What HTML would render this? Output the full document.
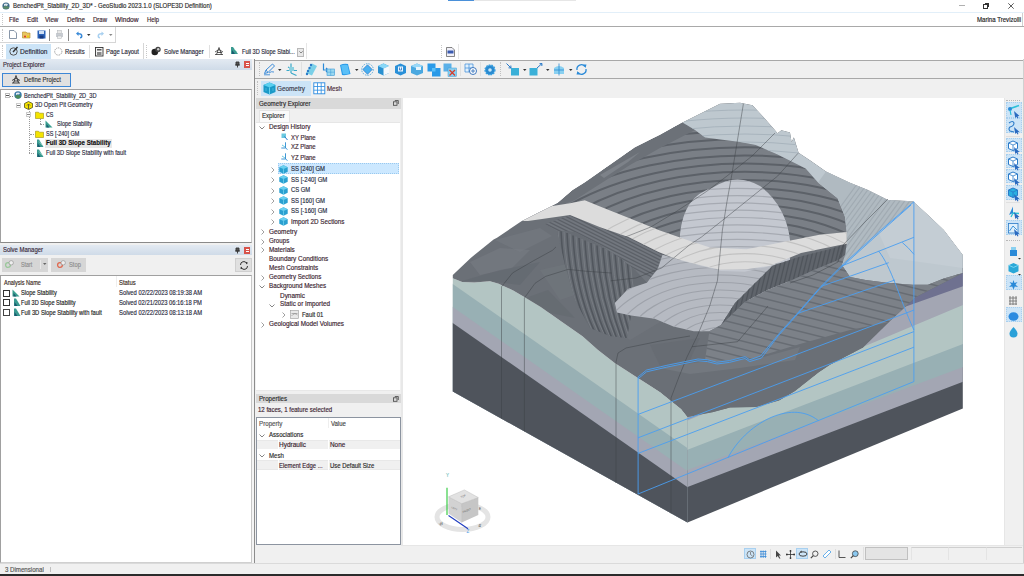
<!DOCTYPE html>
<html><head><meta charset="utf-8">
<style>
*{margin:0;padding:0;box-sizing:border-box}
html,body{width:1024px;height:576px;overflow:hidden;background:#fff;font-family:"Liberation Sans",sans-serif;font-size:6.3px;color:#1e1e1e}
.a{position:absolute}
.t{position:absolute;white-space:nowrap;line-height:1;-webkit-text-stroke:0.15px currentColor}
svg{position:absolute;overflow:visible}
</style></head><body>
<!-- ===== title bar ===== -->
<div class="a" style="left:448px;top:0;width:26px;height:1px;background:#4a90d9"></div>
<div class="a" style="left:474px;top:0;width:102px;height:1px;background:#e6e6e6"></div>
<svg style="left:2px;top:2px" width="8" height="8"><circle cx="4" cy="4" r="3.6" fill="#3d6a8a"/><path d="M1 5 Q4 3 7 5 L7 6 Q4 8 1 6Z" fill="#5a8a6a"/><path d="M2 2 Q4 1 6 2 L5 4 Q3 3 2 4Z" fill="#dfe8ee"/></svg>
<div class="t" style="left:13.00px;top:3px;color:#2a2a2a;transform:scaleX(0.956);transform-origin:0 0">BenchedPit_Stability_2D_3D* - GeoStudio 2023.1.0 (SLOPE3D Definition)</div>
<div class="a" style="left:959px;top:5px;width:6px;height:1px;background:#b0b0b0"></div>
<div class="a" style="left:983px;top:4px;width:5px;height:5px;border:1px solid #333"></div>
<div class="a" style="left:985px;top:3px;width:4px;height:4px;border-top:1px solid #333;border-right:1px solid #333"></div>
<svg style="left:1008px;top:3px" width="6" height="6"><path d="M0.3 0.3L5.7 5.7M5.7 0.3L0.3 5.7" stroke="#333" stroke-width="0.8"/></svg>
<div class="a" style="left:0;top:12px;width:1024px;height:1px;background:#e2eff9"></div>
<!-- ===== menu ===== -->
<div class="a" style="left:2px;top:14px;width:1px;height:11px;border-left:1px dotted #c8c8c8"></div>
<div class="a" style="left:0;top:26px;width:1024px;height:1px;background:#a9a9a9"></div>
<div class="a" style="left:1022px;top:13px;width:1px;height:13px;background:#d0d0d0"></div>
<div class="t" style="left:8.90px;top:16.5px;color:#3a1e2e;transform:scaleX(0.970);transform-origin:0 0">File</div>
<div class="t" style="left:26.50px;top:16.5px;color:#3a1e2e;transform:scaleX(1.013);transform-origin:0 0">Edit</div>
<div class="t" style="left:45.30px;top:16.5px;color:#3a1e2e;transform:scaleX(0.982);transform-origin:0 0">View</div>
<div class="t" style="left:66.90px;top:16.5px;color:#3a1e2e;transform:scaleX(0.983);transform-origin:0 0">Define</div>
<div class="t" style="left:93.00px;top:16.5px;color:#3a1e2e;transform:scaleX(0.952);transform-origin:0 0">Draw</div>
<div class="t" style="left:115.00px;top:16.5px;color:#3a1e2e;transform:scaleX(1.053);transform-origin:0 0">Window</div>
<div class="t" style="left:146.90px;top:16.5px;color:#3a1e2e;transform:scaleX(0.934);transform-origin:0 0">Help</div>
<div class="t" style="left:977.00px;top:17px;color:#222;transform:scaleX(0.967);transform-origin:0 0">Marina Trevizolli</div>
<!-- ===== toolbar row 1 ===== -->
<div class="a" style="left:0;top:27px;width:116px;height:16px;border-right:1px solid #d6d6d6;border-bottom:1px solid #d6d6d6"></div>
<div class="a" style="left:2px;top:29px;width:1px;height:12px;border-left:1px dotted #c8c8c8"></div>
<svg style="left:9px;top:30px" width="8" height="9"><path d="M0.5 0.5H5L7.5 3V8.5H0.5Z" fill="#fff" stroke="#6b7c93" stroke-width="0.8"/></svg>
<svg style="left:22px;top:30px" width="10" height="9"><path d="M0.5 2H4L5 3H8V8H0.5Z" fill="#e8c660" stroke="#b08a2a" stroke-width="0.6"/><circle cx="3" cy="6.5" r="1" fill="#e03020"/><circle cx="6" cy="6.5" r="1" fill="#f0d000"/></svg>
<svg style="left:37px;top:30px" width="9" height="9"><rect x="0.5" y="0.5" width="8" height="8" fill="#2a62b8"/><rect x="2" y="1" width="5" height="3" fill="#cfe0f5"/><rect x="2.5" y="5.5" width="4" height="3" fill="#1a3a80"/></svg>
<div class="a" style="left:49px;top:29px;width:1px;height:12px;background:#8a8a8a"></div>
<svg style="left:55px;top:30px" width="9" height="9"><rect x="1" y="3" width="7" height="4" fill="#c8ccd2"/><rect x="2.5" y="0.5" width="4" height="3" fill="#e8e8e8" stroke="#b0b4b8" stroke-width="0.5"/><rect x="2.5" y="6" width="4" height="2.5" fill="#f0f0f0" stroke="#b0b4b8" stroke-width="0.5"/></svg>
<div class="a" style="left:68px;top:29px;width:1px;height:12px;background:#8a8a8a"></div>
<svg style="left:75px;top:31px" width="8" height="8"><path d="M1 2.5 L3.5 0.5 V2 Q7.5 2 7.5 5 Q7.5 7.5 5 7.5 L5 6 Q6 6 6 4.8 Q6 3.5 3.5 3.5 V5Z" fill="#3a8ad8"/></svg>
<svg style="left:87px;top:34px" width="4" height="3"><path d="M0 0H3.5L1.75 2Z" fill="#333"/></svg>
<svg style="left:97px;top:31px" width="8" height="8"><path d="M7 2.5 L4.5 0.5 V2 Q0.5 2 0.5 5 Q0.5 7.5 3 7.5 L3 6 Q2 6 2 4.8 Q2 3.5 4.5 3.5 V5Z" fill="#a8d0f0"/></svg>
<svg style="left:109px;top:34px" width="4" height="3"><path d="M0 0H3.5L1.75 2Z" fill="#888"/></svg>
<!-- ===== toolbar row 2 ===== -->
<div class="a" style="left:0;top:43px;width:144px;height:16px;border-right:1px solid #d6d6d6"></div>
<div class="a" style="left:2px;top:45px;width:1px;height:12px;border-left:1px dotted #c8c8c8"></div>
<div class="a" style="left:6px;top:44px;width:45px;height:15px;background:#cce4f7"></div>
<svg style="left:9px;top:46px" width="10" height="10"><circle cx="4.5" cy="5.5" r="3.7" fill="none" stroke="#555" stroke-width="1"/><path d="M4 6 L8.5 1" stroke="#333" stroke-width="1.4"/></svg>
<div class="t" style="left:19.50px;top:48.5px;color:#2a2a3a;font-size:6.3px;transform:scaleX(1.047);transform-origin:0 0">Definition</div>
<svg style="left:54px;top:47px" width="9" height="9"><circle cx="4.3" cy="4.5" r="3.6" fill="none" stroke="#777" stroke-width="0.8" stroke-dasharray="1 0.8"/></svg>
<div class="t" style="left:64.80px;top:48.5px;color:#2a2a3a;transform:scaleX(0.933);transform-origin:0 0">Results</div>
<div class="a" style="left:89px;top:45px;width:1px;height:13px;background:#e0e0e0"></div>
<svg style="left:95px;top:46.5px" width="9" height="10"><rect x="0.5" y="0.5" width="7.5" height="8.5" fill="#f4f4f4" stroke="#333" stroke-width="0.9"/><rect x="2" y="2" width="4.5" height="1.5" fill="#555"/><rect x="2" y="5" width="4.5" height="3" fill="#888"/></svg>
<div class="t" style="left:106.00px;top:48.5px;color:#2a2a3a;transform:scaleX(0.933);transform-origin:0 0">Page Layout</div>
<div class="a" style="left:146px;top:45px;width:1px;height:13px;border-left:1px dotted #c8c8c8"></div>
<svg style="left:151px;top:46px" width="11" height="10"><circle cx="3.8" cy="6" r="3.3" fill="#222"/><circle cx="7" cy="3.5" r="2.7" fill="#444"/><circle cx="7.2" cy="3.3" r="1.2" fill="#ccc"/></svg>
<div class="t" style="left:163.70px;top:48.5px;color:#2a2a3a;transform:scaleX(0.935);transform-origin:0 0">Solve Manager</div>
<div class="a" style="left:209px;top:45px;width:1px;height:13px;background:#e0e0e0"></div>
<svg style="left:213.5px;top:46px" width="10" height="10"><path d="M1 8.5 H9 M2.5 8.5 L5 1.5 L7.5 8.5 M1 6 L5 3.5 L9 6 M3 6.5 L8 6.5" stroke="#333" stroke-width="0.8" fill="none"/></svg>
<svg style="left:230px;top:46px" width="9" height="10"><path d="M1 1 L3 1 L8 8 L1 8Z" fill="#3a9a90"/><path d="M2 4 L5 8 L2 8Z" fill="#1a5a70"/><path d="M4 3 L7 6" stroke="#8fd0c0" stroke-width="0.8"/></svg>
<div class="t" style="left:242.00px;top:48.5px;color:#2a2a3a;transform:scaleX(0.891);transform-origin:0 0">Full 3D Slope Stabi...</div>
<div class="a" style="left:297px;top:47.5px;width:7px;height:9px;background:#e8e8e8;border:1px solid #b8b8b8"></div>
<svg style="left:298.5px;top:50.5px" width="4" height="3"><path d="M0.3 0.3L2 2L3.7 0.3" stroke="#444" stroke-width="0.6" fill="none"/></svg>
<div class="a" style="left:306px;top:43px;width:1px;height:16px;background:#e6e6e6"></div>
<div class="a" style="left:439px;top:44px;width:20px;height:15px;border-right:1px solid #e6e6e6"></div>
<div class="a" style="left:441px;top:45px;width:1px;height:13px;border-left:1px dotted #c8c8c8"></div>
<svg style="left:446px;top:46.5px" width="9" height="10"><path d="M0.5 0.5H6L8.5 3V9.5H0.5Z" fill="#f0f0f8" stroke="#555" stroke-width="0.7"/><rect x="1.5" y="3.5" width="6" height="3" fill="#3a5ab0"/></svg>
<!-- ===== left panel ===== -->
<div class="a" style="left:0;top:59px;width:252px;height:10.5px;background:linear-gradient(#e3eaf2,#cfdbe8)"></div>
<div class="t" style="left:2.50px;top:62px;color:#3a2a3a;transform:scaleX(0.935);transform-origin:0 0">Project Explorer</div>
<svg style="left:235px;top:61px" width="5" height="7"><path d="M1 1H4V4H1Z M0 4H5 M2.5 4V6.5" stroke="#333" stroke-width="0.9" fill="#555"/></svg>
<div class="a" style="left:244px;top:61px;width:6px;height:7px;background:#d8534a"></div>
<div class="a" style="left:245.5px;top:63px;width:3px;height:3px;border-top:1px solid #fff;border-bottom:1px solid #fff"></div>
<div class="a" style="left:0;top:69.5px;width:252px;height:19.5px;background:#f0f0f0"></div>
<div class="a" style="left:2px;top:73px;width:69px;height:14px;background:#e1e1e1;border:1px solid #3d87d6"></div>
<svg style="left:11px;top:74px" width="10" height="11"><path d="M1 9 H9 M2.5 9 L5 1.5 L7.5 9 M1 6.5 L5 4 L9 6.5 M3 7 L8 7" stroke="#222" stroke-width="0.8" fill="none"/></svg>
<div class="t" style="left:23.75px;top:77px;color:#333;transform:scaleX(0.931);transform-origin:0 0">Define Project</div>
<div class="a" style="left:0;top:89px;width:252px;height:154px;background:#fff;border-left:1px solid #a0a0a0;border-top:1px solid #a0a0a0;border-bottom:1px solid #8a8a8a;border-right:1px solid #c8c8c8"></div>
<!-- tree -->
<div class="a" style="left:4.5px;top:93px;width:5px;height:5px;border:1px solid #bbb"></div>
<div class="a" style="left:5.5px;top:95px;width:3px;height:1px;background:#555"></div>
<div class="a" style="left:10px;top:95.5px;width:3px;height:1px;border-top:1px dotted #888"></div>
<svg style="left:13.5px;top:91px" width="8" height="8"><circle cx="4" cy="4" r="3.7" fill="#3a7aa8"/><path d="M0.8 5 Q4 3.2 7.2 5 Q6 7.8 4 7.8 Q2 7.8 0.8 5Z" fill="#4a8a5a"/><path d="M2 2 Q4 0.8 6 2 L5 3.5 Q3.5 3 2 4Z" fill="#e8eef2"/></svg>
<div class="t" style="left:24.40px;top:92.5px;color:#2a2a40;transform:scaleX(0.896);transform-origin:0 0">BenchedPit_Stability_2D_3D</div>
<div class="a" style="left:15.5px;top:102.5px;width:5px;height:5px;border:1px solid #ccc"></div>
<div class="a" style="left:16.5px;top:104.5px;width:3px;height:1px;background:#777"></div>
<svg style="left:24px;top:100.5px" width="9" height="9"><path d="M4.5 0.5 L8.5 2.5 V6.5 L4.5 8.5 L0.5 6.5 V2.5Z" fill="#f2e000" stroke="#3a3a10" stroke-width="0.7"/><path d="M4.5 8 V3.5 M3 4.5 L4.5 3 L6 4.5" stroke="#333" stroke-width="0.7" fill="none"/></svg>
<div class="t" style="left:35.00px;top:102px;color:#2a2a40;transform:scaleX(0.903);transform-origin:0 0">3D Open Pit Geometry</div>
<div class="a" style="left:28.5px;top:109px;width:0;height:35px;border-left:1px dotted #999"></div>
<div class="a" style="left:26px;top:112px;width:5px;height:5px;border:1px solid #ccc;background:#fff"></div>
<div class="a" style="left:27px;top:114px;width:3px;height:1px;background:#888"></div>
<svg style="left:35px;top:110.5px" width="9" height="8"><path d="M0.5 1.2 H3.5 L4.5 2.2 H8.5 V7.5 H0.5Z" fill="#f4e400" stroke="#8a7a00" stroke-width="0.5"/></svg>
<div class="t" style="left:45.60px;top:111.5px;color:#2a2a40;transform:scaleX(0.846);transform-origin:0 0">CS</div>
<div class="a" style="left:39.5px;top:119px;width:0;height:5px;border-left:1px dotted #999"></div>
<div class="a" style="left:40px;top:124px;width:4px;height:0;border-top:1px dotted #999"></div>
<svg style="left:45px;top:120px" width="8" height="8"><path d="M0.5 0.5 L7.5 7.5 H0.5Z" fill="#3aa090"/><path d="M1.5 4 L4.5 7.5 H1.5Z" fill="#1a5a70"/></svg>
<div class="t" style="left:56.90px;top:121px;color:#2a2a40;transform:scaleX(0.877);transform-origin:0 0">Slope Stability</div>
<div class="a" style="left:30px;top:133.5px;width:4px;height:0;border-top:1px dotted #999"></div>
<svg style="left:35px;top:129.5px" width="9" height="8"><path d="M0.5 1.2 H3.5 L4.5 2.2 H8.5 V7.5 H0.5Z" fill="#f4e400" stroke="#8a7a00" stroke-width="0.5"/></svg>
<div class="t" style="left:46.00px;top:130.5px;color:#2a2a40;transform:scaleX(0.875);transform-origin:0 0">SS [-240] GM</div>
<div class="a" style="left:30px;top:143px;width:4px;height:0;border-top:1px dotted #999"></div>
<div class="a" style="left:45px;top:138.5px;width:66.5px;height:9.5px;background:#e8e8e8"></div>
<svg style="left:36px;top:139px" width="8" height="9"><path d="M1 0.5 L3 0.5 L7.5 8 L1 8Z" fill="#3a9a90"/><path d="M1.5 4 L4.5 8 L1.5 8Z" fill="#1a5a70"/><path d="M3 2.5 L6 6" stroke="#9ad8c8" stroke-width="0.7"/></svg>
<div class="t" style="left:46.00px;top:140px;color:#111;font-weight:bold;transform:scaleX(0.977);transform-origin:0 0">Full 3D Slope Stability</div>
<div class="a" style="left:28.5px;top:144px;width:0;height:9px;border-left:1px dotted #999"></div>
<div class="a" style="left:29px;top:153px;width:5px;height:0;border-top:1px dotted #999"></div>
<svg style="left:36px;top:149px" width="8" height="9"><path d="M1 0.5 L3 0.5 L7.5 8 L1 8Z" fill="#3a9a90"/><path d="M1.5 4 L4.5 8 L1.5 8Z" fill="#1a5a70"/><path d="M3 2.5 L6 6" stroke="#9ad8c8" stroke-width="0.7"/></svg>
<div class="t" style="left:46.00px;top:150px;color:#2a2a40;transform:scaleX(0.907);transform-origin:0 0">Full 3D Slope Stability with fault</div>
<!-- splitter -->
<div class="a" style="left:252px;top:59px;width:2px;height:504px;background:#f4f4f4"></div>
<div class="a" style="left:254px;top:59px;width:1px;height:504px;background:#8c8c8c"></div>
<!-- solve manager -->
<div class="a" style="left:0;top:243px;width:252px;height:2px;background:#f0f0f0"></div>
<div class="a" style="left:0;top:245px;width:252px;height:9.5px;background:linear-gradient(#e3eaf2,#cfdbe8)"></div>
<div class="t" style="left:2.50px;top:247px;color:#3a2a3a;transform:scaleX(0.944);transform-origin:0 0">Solve Manager</div>
<svg style="left:235px;top:247px" width="5" height="7"><path d="M1 1H4V4H1Z M0 4H5 M2.5 4V6.5" stroke="#333" stroke-width="0.9" fill="#555"/></svg>
<div class="a" style="left:244px;top:247px;width:6px;height:6.5px;background:#d8534a"></div>
<div class="a" style="left:245.5px;top:249px;width:3px;height:3px;border-top:1px solid #fff;border-bottom:1px solid #fff"></div>
<div class="a" style="left:0;top:254.5px;width:252px;height:20px;background:#f0f0f0"></div>
<div class="a" style="left:2px;top:258px;width:46px;height:13.5px;background:#d6d6d6"></div>
<div class="a" style="left:39.5px;top:260px;width:1px;height:9px;background:#e8e8e8"></div>
<svg style="left:42.5px;top:263px" width="4" height="3"><path d="M0 0H3.5L1.75 2Z" fill="#666"/></svg>
<svg style="left:5px;top:259.5px" width="9" height="8"><circle cx="3" cy="5" r="2.4" fill="none" stroke="#9ac89a" stroke-width="1.3"/><circle cx="6.2" cy="2.8" r="2.2" fill="#eee" stroke="#888" stroke-width="0.6"/></svg>
<div class="t" style="left:20.60px;top:261.5px;color:#8c8c8c;transform:scaleX(0.849);transform-origin:0 0">Start</div>
<div class="a" style="left:51px;top:258px;width:35px;height:13.5px;background:#d6d6d6"></div>
<svg style="left:56.5px;top:259.5px" width="9" height="8"><circle cx="3" cy="5" r="2.4" fill="none" stroke="#e06a50" stroke-width="1.3"/><circle cx="6.2" cy="2.8" r="2.2" fill="#eee" stroke="#888" stroke-width="0.6"/></svg>
<div class="t" style="left:68.75px;top:261.5px;color:#8c8c8c;transform:scaleX(0.914);transform-origin:0 0">Stop</div>
<div class="a" style="left:234.5px;top:258px;width:17.5px;height:14px;background:#e0e0e0;border:1px solid #cfcfcf"></div>
<svg style="left:238.5px;top:260.5px" width="10" height="9"><path d="M1.5 4 A3.3 3.3 0 0 1 7.8 2.5 M8.5 5 A3.3 3.3 0 0 1 2.2 6.5" stroke="#222" stroke-width="0.9" fill="none"/><path d="M6.5 1.5 L8.5 1 L8 3.5Z M3.5 7.5 L1.5 8 L2 5.5Z" fill="#222"/></svg>
<div class="a" style="left:0;top:274.5px;width:252px;height:288.5px;background:#fff;border-left:1px solid #a0a0a0;border-top:1px solid #a0a0a0;border-bottom:1px solid #d0d0d0;border-right:1px solid #c8c8c8"></div>
<div class="t" style="left:3.75px;top:279.5px;color:#3a2a20;transform:scaleX(0.877);transform-origin:0 0">Analysis Name</div>
<div class="a" style="left:115.5px;top:276px;width:1px;height:11px;background:#eee"></div>
<div class="t" style="left:118.75px;top:279.5px;color:#3a2a20;transform:scaleX(0.938);transform-origin:0 0">Status</div>
<div class="a" style="left:3px;top:289.5px;width:7px;height:7px;border:1px solid #333;background:#fff"></div>
<svg style="left:12px;top:289px" width="8" height="8"><path d="M0.5 0.5 L7.5 7.5 H0.5Z" fill="#3aa090"/><path d="M1.5 4 L4.5 7.5 H1.5Z" fill="#1a5a70"/></svg>
<div class="t" style="left:21.25px;top:290px;color:#222;transform:scaleX(0.896);transform-origin:0 0">Slope Stability</div>
<div class="t" style="left:118.75px;top:290px;color:#2a2a40;transform:scaleX(0.926);transform-origin:0 0">Solved 02/22/2023 08:19:38 AM</div>
<div class="a" style="left:3px;top:299px;width:7px;height:7px;border:1px solid #333;background:#fff"></div>
<svg style="left:12.5px;top:298px" width="8" height="9"><path d="M1 0.5 L3 0.5 L7.5 8 L1 8Z" fill="#3a9a90"/><path d="M1.5 4 L4.5 8 L1.5 8Z" fill="#1a5a70"/></svg>
<div class="t" style="left:21.00px;top:300px;color:#222;transform:scaleX(0.886);transform-origin:0 0">Full 3D Slope Stability</div>
<div class="t" style="left:118.75px;top:300px;color:#2a2a40;transform:scaleX(0.922);transform-origin:0 0">Solved 02/21/2023 06:16:18 PM</div>
<div class="a" style="left:3px;top:309px;width:7px;height:7px;border:1px solid #444;background:#fff"></div>
<svg style="left:12.5px;top:308px" width="8" height="9"><path d="M1 0.5 L3 0.5 L7.5 8 L1 8Z" fill="#3a9a90"/><path d="M1.5 4 L4.5 8 L1.5 8Z" fill="#1a5a70"/></svg>
<div class="t" style="left:21.00px;top:310px;color:#222;transform:scaleX(0.917);transform-origin:0 0">Full 3D Slope Stability with fault</div>
<div class="t" style="left:118.75px;top:310px;color:#2a2a40;transform:scaleX(0.926);transform-origin:0 0">Solved 02/22/2023 08:13:18 AM</div>
<!-- status bar -->
<div class="a" style="left:0;top:563px;width:1024px;height:11px;background:#f0f0f0;border-top:1px solid #dadada"></div>
<div class="t" style="left:5.00px;top:566.5px;color:#555;transform:scaleX(0.971);transform-origin:0 0">3 Dimensional</div>
<div class="a" style="left:50px;top:567px;width:1px;height:5px;background:#c0c0c0"></div>
<div class="a" style="left:0;top:574px;width:1024px;height:2px;background:#2b2b2b"></div>
<!-- ===== viewport toolbar ===== -->
<div class="a" style="left:255px;top:59.5px;width:769px;height:19px;background:#f0f0f0;border-top:1px solid #a8a8a8;border-bottom:1px solid #a8a8a8"></div>
<div class="a" style="left:258.5px;top:62px;width:1px;height:14px;border-left:1px dotted #c0c0c0"></div>
<svg style="left:263px;top:63px" width="13" height="13"><path d="M1.5 10.5 L3 7 L9.5 1 L11.5 3 L5 9.5Z M3 7 L5 9.5" stroke="#3a8ad8" stroke-width="1" fill="none"/><path d="M1 11.8 H7 M6 10 Q8 8 11 9" stroke="#3a8ad8" stroke-width="0.9" fill="none"/></svg>
<svg style="left:278px;top:68.5px" width="4" height="3"><path d="M0 0H3.5L1.75 2Z" fill="#333"/></svg>
<svg style="left:286px;top:63px" width="12" height="13"><path d="M5 0.5 V10 M0.5 7.5 H11 M5 10 L10.5 12.5 M2 4 L8 7" stroke="#3aa8c8" stroke-width="1.2" fill="none"/><rect x="3" y="4" width="5" height="4" fill="#8ad0e0"/></svg>
<div class="a" style="left:300.5px;top:62px;width:1px;height:14px;background:#e0e0e0"></div>
<svg style="left:305px;top:63px" width="13" height="13"><path d="M7 0.5 L12 3 L7 12.5 L1 10Z" fill="#7ad0e8"/><circle cx="6" cy="2" r="1.2" fill="#2a7ac8"/><circle cx="4.5" cy="5" r="1.2" fill="#2a7ac8"/><circle cx="3" cy="8" r="1.2" fill="#2a7ac8"/><circle cx="2" cy="11" r="1.2" fill="#2a7ac8"/></svg>
<svg style="left:322px;top:63px" width="13" height="13"><path d="M1.5 0.5 V7 H6 M4 5 L6 7 L4 9" stroke="#2a8ad8" stroke-width="1.2" fill="none"/><rect x="5" y="6" width="7.5" height="6.5" fill="#9ad8f0" stroke="#3a9ad8" stroke-width="0.6"/><path d="M5 9.2 H12.5 M8.7 6 V12.5" stroke="#3a9ad8" stroke-width="0.5"/></svg>
<svg style="left:338px;top:63px" width="13" height="13"><path d="M2 2 Q6 0 10 1 L12.5 11 Q8 12.5 4 12 Z" fill="#2a9ae8"/><path d="M3 2.5 Q6 1.2 9.5 2 L11.5 10.5 Q8 11.5 5 11 Z" fill="#5ac0f8"/></svg>
<svg style="left:354.5px;top:68.5px" width="4" height="3"><path d="M0 0H3.5L1.75 2Z" fill="#333"/></svg>
<svg style="left:361px;top:63px" width="13" height="13"><circle cx="6.5" cy="6.5" r="5.8" fill="none" stroke="#3a9ad8" stroke-width="0.8" stroke-dasharray="1.5 1"/><path d="M6.5 1.8 L11.2 6.5 L6.5 11.2 L1.8 6.5Z" fill="#4ab0f0" stroke="#2a7ac8" stroke-width="0.7"/></svg>
<svg style="left:377px;top:63px" width="13" height="13"><path d="M6.5 0.5 L12 3 V10 L6.5 12.5 L1 10 V3Z" fill="#2a90d0"/><path d="M1 3 L6.5 5.5 L12 3 L6.5 0.5Z" fill="#8ad8f8"/><path d="M6.5 5.5 V12.5 L12 10 V3Z" fill="#f4f8fc"/></svg>
<svg style="left:394px;top:63px" width="13" height="13"><path d="M6.5 0.5 L12 3 V10 L6.5 12.5 L1 10 V3Z" fill="#2a90d8"/><rect x="4" y="3.5" width="5" height="5" fill="#e8f4fc"/><path d="M5.5 4.5 V7 H7.5 V4.5" stroke="#2a70c0" stroke-width="0.8" fill="none"/></svg>
<svg style="left:410px;top:63px" width="14" height="13"><path d="M7 0.5 L13 3 V10 L7 12.5 L1 10 V3Z" fill="#4aa8e0"/><path d="M1 3 L7 5.5 L13 3 L7 0.5Z" fill="#9ad8f8"/><path d="M6 4 L11 4 L11 7 L6 7Z" fill="#e8f4fc"/></svg>
<svg style="left:427px;top:63px" width="14" height="14"><rect x="0.5" y="0.5" width="8" height="8" fill="#2a9ae8"/><rect x="5" y="5" width="8.5" height="8.5" fill="#2a9ae8"/><rect x="5" y="5" width="3.5" height="3.5" fill="#5ac0f8"/></svg>
<svg style="left:443px;top:63px" width="14" height="14"><rect x="0.5" y="0.5" width="8" height="8" fill="#5ab0e8"/><rect x="5" y="5" width="8.5" height="8.5" fill="#8ad0f0" stroke="#3a9ad8" stroke-width="0.5"/><path d="M6.5 7 L12 12.5 M12 7 L6.5 12.5" stroke="#d83a2a" stroke-width="1.2"/></svg>
<div class="a" style="left:460px;top:62px;width:1px;height:14px;background:#e0e0e0"></div>
<svg style="left:463.5px;top:63px" width="14" height="13"><path d="M1 1 H9 V9 H1Z M1 5 H9 M5 1 V9" stroke="#3a8ad8" stroke-width="0.7" fill="#e0f0fc"/><circle cx="9" cy="8" r="3.5" fill="#fff" stroke="#2a6ab8" stroke-width="0.9"/><path d="M9 6 V10 M7 8 H11" stroke="#2a6ab8" stroke-width="0.8"/></svg>
<div class="a" style="left:480px;top:62px;width:1px;height:14px;background:#e0e0e0"></div>
<svg style="left:483.5px;top:64px" width="12" height="12"><circle cx="6" cy="6" r="4.8" fill="#2a8ad0" stroke="#3aa0e0" stroke-width="1.6" stroke-dasharray="1.6 1"/><circle cx="6" cy="6" r="1.8" fill="#c8e8f8"/></svg>
<div class="a" style="left:500px;top:62px;width:1px;height:14px;border-left:1px dotted #c0c0c0"></div>
<svg style="left:505.5px;top:63px" width="14" height="13"><path d="M0.5 0.5 L5 5 M5 5 L4.8 2.5 M5 5 L2.5 4.8" stroke="#2a7ac8" stroke-width="1" fill="none"/><rect x="5" y="5" width="8" height="7.5" fill="#3ab0d8"/></svg>
<svg style="left:523px;top:68.5px" width="4" height="3"><path d="M0 0H3.5L1.75 2Z" fill="#333"/></svg>
<svg style="left:529px;top:63px" width="14" height="13"><rect x="0.5" y="5" width="8" height="7.5" fill="#3ab0d8"/><path d="M8 5 L13 0.5 M13 0.5 L10.5 0.7 M13 0.5 L12.8 3" stroke="#2a7ac8" stroke-width="1" fill="none"/></svg>
<svg style="left:545.5px;top:68.5px" width="4" height="3"><path d="M0 0H3.5L1.75 2Z" fill="#333"/></svg>
<svg style="left:553px;top:63px" width="12" height="13"><path d="M1 5 Q6 1 11 5 V11 H1Z" fill="#8ad0f0"/><path d="M6 0.5 V12.5 M1 7 H11" stroke="#2a8ad0" stroke-width="0.8"/></svg>
<svg style="left:569px;top:68.5px" width="4" height="3"><path d="M0 0H3.5L1.75 2Z" fill="#333"/></svg>
<svg style="left:575px;top:63px" width="13" height="13"><path d="M2 7 A4.5 4.5 0 0 1 10 3.5 M11 6 A4.5 4.5 0 0 1 3 9.5" stroke="#2a8ad8" stroke-width="1.3" fill="none"/><path d="M8.5 1.5 L11.5 1.5 L10.5 5Z M4.5 11.5 L1.5 11.5 L2.5 8Z" fill="#2a8ad8"/></svg>
<!-- tab row -->
<div class="a" style="left:255px;top:78.5px;width:769px;height:19px;background:#f0f0f0"></div>
<div class="a" style="left:257px;top:81px;width:1px;height:14px;border-left:1px dotted #c0c0c0"></div>
<div class="a" style="left:260.5px;top:80.5px;width:50px;height:15.5px;background:#cce4f7"></div>
<svg style="left:263px;top:82px" width="13" height="13"><path d="M6.5 0.5 L12.5 3 V10 L6.5 12.5 L0.5 10 V3Z" fill="#1a9ac8"/><path d="M0.5 3 L6.5 5.5 L12.5 3 L6.5 0.5Z" fill="#5ad0f0"/><path d="M6.5 5.5 V12.5" stroke="#7ae0f8" stroke-width="0.8"/><path d="M3 6 V9 M10 6 V9" stroke="#5ac8e8" stroke-width="0.6"/></svg>
<div class="t" style="left:277.00px;top:85.5px;color:#3a3a4a;transform:scaleX(1.012);transform-origin:0 0">Geometry</div>
<svg style="left:313px;top:82px" width="13" height="13"><rect x="0.8" y="0.8" width="11" height="11" fill="#fff" stroke="#2a8ae0" stroke-width="0.9"/><path d="M4.5 0.8 V11.8 M8.2 0.8 V11.8 M0.8 4.5 H11.8 M0.8 8.2 H11.8" stroke="#2a8ae0" stroke-width="0.8"/></svg>
<div class="t" style="left:327.00px;top:85.5px;color:#4a2a3a;transform:scaleX(0.974);transform-origin:0 0">Mesh</div>
<!-- ===== geometry explorer ===== -->
<div class="a" style="left:255px;top:97.5px;width:147px;height:448px;background:#f0f0f0"></div>
<div class="a" style="left:255.5px;top:98px;width:145.5px;height:10.5px;background:#d9d9d9"></div>
<div class="t" style="left:258.60px;top:100.5px;color:#2a2a2a;transform:scaleX(0.976);transform-origin:0 0">Geometry Explorer</div>
<svg style="left:392.5px;top:100px" width="6" height="6"><rect x="0.5" y="1.8" width="3.5" height="3.5" fill="none" stroke="#444" stroke-width="0.8"/><path d="M1.8 0.5 H5.3 V4" stroke="#444" stroke-width="0.8" fill="none"/></svg>
<div class="a" style="left:259px;top:109.5px;width:31px;height:12.5px;background:#fafafa;border:1px solid #e4e4e4;border-bottom:none"></div>
<div class="t" style="left:261.70px;top:112.5px;color:#333;transform:scaleX(0.968);transform-origin:0 0">Explorer</div>
<div class="a" style="left:256px;top:121.5px;width:144px;height:268px;background:#fff;border-top:1px solid #e6e6e6"></div>
<svg style="left:258.5px;top:125.5px" width="6" height="4"><path d="M0.5 0.5 L3 3 L5.5 0.5" stroke="#666" stroke-width="0.8" fill="none"/></svg>
<div class="t" style="left:268.75px;top:124px;color:#3a1e30;transform:scaleX(1.012);transform-origin:0 0">Design History</div>
<svg style="left:280.5px;top:132.5px" width="7" height="8"><rect x="0.5" y="0.5" width="4.5" height="4.5" fill="#6ac8e0"/><path d="M3.5 3.5 L6.5 7" stroke="#2a7ac8" stroke-width="1"/></svg>
<div class="t" style="left:291.00px;top:134.5px;color:#3a1e30;transform:scaleX(0.941);transform-origin:0 0">XY Plane</div>
<svg style="left:280.5px;top:142px" width="7" height="8"><path d="M4.5 0.3 V6 H0.3 M4.5 6 L6.5 7.5" stroke="#2a8ad0" stroke-width="0.9" fill="none"/><path d="M1 3 L4 5" stroke="#6ac8e0" stroke-width="1"/></svg>
<div class="t" style="left:291.00px;top:144px;color:#3a1e30;transform:scaleX(0.950);transform-origin:0 0">XZ Plane</div>
<svg style="left:280.5px;top:153px" width="7" height="8"><path d="M4.5 0.3 V6 H0.3 M4.5 6 L6.5 7.5" stroke="#2a8ad0" stroke-width="0.9" fill="none"/><path d="M1 3 L4 5" stroke="#6ac8e0" stroke-width="1"/></svg>
<div class="t" style="left:291.00px;top:155px;color:#3a1e30;transform:scaleX(0.950);transform-origin:0 0">YZ Plane</div>
<div class="a" style="left:277.5px;top:163px;width:121.5px;height:10.5px;background:#cce8ff;border:1px dotted #99c9ef"></div>
<svg style="left:271px;top:166.5px" width="4" height="6"><path d="M0.5 0.5 L3 3 L0.5 5.5" stroke="#888" stroke-width="0.8" fill="none"/></svg>
<svg style="left:279px;top:164.5px" width="9" height="9"><path d="M4.5 0.3 L8.7 2.2 V6.8 L4.5 8.7 L0.3 6.8 V2.2Z" fill="#2aa0d0"/><path d="M0.3 2.2 L4.5 4.1 L8.7 2.2 L4.5 0.3Z" fill="#6ad0f0"/><path d="M4.5 4.1 V8.7" stroke="#8ae0f8" stroke-width="0.6"/></svg>
<div class="t" style="left:291.00px;top:166px;color:#1e2a40;transform:scaleX(0.943);transform-origin:0 0">SS [240] GM</div>
<svg style="left:271px;top:177.0px" width="4" height="6"><path d="M0.5 0.5 L3 3 L0.5 5.5" stroke="#888" stroke-width="0.8" fill="none"/></svg>
<svg style="left:279px;top:175.0px" width="9" height="9"><path d="M4.5 0.3 L8.7 2.2 V6.8 L4.5 8.7 L0.3 6.8 V2.2Z" fill="#2aa0d0"/><path d="M0.3 2.2 L4.5 4.1 L8.7 2.2 L4.5 0.3Z" fill="#6ad0f0"/><path d="M4.5 4.1 V8.7" stroke="#8ae0f8" stroke-width="0.6"/></svg>
<div class="t" style="left:291.00px;top:176.5px;color:#1e2a40;transform:scaleX(0.951);transform-origin:0 0">SS [-240] GM</div>
<svg style="left:271px;top:187.5px" width="4" height="6"><path d="M0.5 0.5 L3 3 L0.5 5.5" stroke="#888" stroke-width="0.8" fill="none"/></svg>
<svg style="left:279px;top:185.5px" width="9" height="9"><path d="M4.5 0.3 L8.7 2.2 V6.8 L4.5 8.7 L0.3 6.8 V2.2Z" fill="#2aa0d0"/><path d="M0.3 2.2 L4.5 4.1 L8.7 2.2 L4.5 0.3Z" fill="#6ad0f0"/><path d="M4.5 4.1 V8.7" stroke="#8ae0f8" stroke-width="0.6"/></svg>
<div class="t" style="left:291.00px;top:187px;color:#1e2a40;transform:scaleX(0.930);transform-origin:0 0">CS GM</div>
<svg style="left:271px;top:198.0px" width="4" height="6"><path d="M0.5 0.5 L3 3 L0.5 5.5" stroke="#888" stroke-width="0.8" fill="none"/></svg>
<svg style="left:279px;top:196.0px" width="9" height="9"><path d="M4.5 0.3 L8.7 2.2 V6.8 L4.5 8.7 L0.3 6.8 V2.2Z" fill="#2aa0d0"/><path d="M0.3 2.2 L4.5 4.1 L8.7 2.2 L4.5 0.3Z" fill="#6ad0f0"/><path d="M4.5 4.1 V8.7" stroke="#8ae0f8" stroke-width="0.6"/></svg>
<div class="t" style="left:291.00px;top:197.5px;color:#1e2a40;transform:scaleX(0.943);transform-origin:0 0">SS [160] GM</div>
<svg style="left:271px;top:208.5px" width="4" height="6"><path d="M0.5 0.5 L3 3 L0.5 5.5" stroke="#888" stroke-width="0.8" fill="none"/></svg>
<svg style="left:279px;top:206.5px" width="9" height="9"><path d="M4.5 0.3 L8.7 2.2 V6.8 L4.5 8.7 L0.3 6.8 V2.2Z" fill="#2aa0d0"/><path d="M0.3 2.2 L4.5 4.1 L8.7 2.2 L4.5 0.3Z" fill="#6ad0f0"/><path d="M4.5 4.1 V8.7" stroke="#8ae0f8" stroke-width="0.6"/></svg>
<div class="t" style="left:291.00px;top:208px;color:#1e2a40;transform:scaleX(0.951);transform-origin:0 0">SS [-160] GM</div>
<svg style="left:271px;top:219.0px" width="4" height="6"><path d="M0.5 0.5 L3 3 L0.5 5.5" stroke="#888" stroke-width="0.8" fill="none"/></svg>
<svg style="left:279px;top:217.0px" width="9" height="9"><path d="M4.5 0.3 L8.7 2.2 V6.8 L4.5 8.7 L0.3 6.8 V2.2Z" fill="#2aa0d0"/><path d="M0.3 2.2 L4.5 4.1 L8.7 2.2 L4.5 0.3Z" fill="#6ad0f0"/><path d="M4.5 4.1 V8.7" stroke="#8ae0f8" stroke-width="0.6"/></svg>
<div class="t" style="left:291.00px;top:218.5px;color:#3a1e30;transform:scaleX(0.999);transform-origin:0 0">Import 2D Sections</div>
<svg style="left:261px;top:229.2px" width="4" height="6"><path d="M0.5 0.5 L3 3 L0.5 5.5" stroke="#888" stroke-width="0.8" fill="none"/></svg>
<div class="t" style="left:268.75px;top:228.7px;color:#3a1e30;transform:scaleX(1.018);transform-origin:0 0">Geometry</div>
<svg style="left:261px;top:238.5px" width="4" height="6"><path d="M0.5 0.5 L3 3 L0.5 5.5" stroke="#888" stroke-width="0.8" fill="none"/></svg>
<div class="t" style="left:268.75px;top:238px;color:#3a1e30;transform:scaleX(0.980);transform-origin:0 0">Groups</div>
<svg style="left:261px;top:247.2px" width="4" height="6"><path d="M0.5 0.5 L3 3 L0.5 5.5" stroke="#888" stroke-width="0.8" fill="none"/></svg>
<div class="t" style="left:268.75px;top:246.7px;color:#3a1e30;transform:scaleX(1.008);transform-origin:0 0">Materials</div>
<div class="t" style="left:268.75px;top:256px;color:#3a1e30;transform:scaleX(1.013);transform-origin:0 0">Boundary Conditions</div>
<div class="t" style="left:268.75px;top:265px;color:#3a1e30;transform:scaleX(1.005);transform-origin:0 0">Mesh Constraints</div>
<svg style="left:261px;top:274.5px" width="4" height="6"><path d="M0.5 0.5 L3 3 L0.5 5.5" stroke="#888" stroke-width="0.8" fill="none"/></svg>
<div class="t" style="left:268.75px;top:274px;color:#3a1e30;transform:scaleX(0.976);transform-origin:0 0">Geometry Sections</div>
<svg style="left:258.5px;top:284.9px" width="6" height="4"><path d="M0.5 0.5 L3 3 L5.5 0.5" stroke="#666" stroke-width="0.8" fill="none"/></svg>
<div class="t" style="left:268.75px;top:283.4px;color:#3a1e30;transform:scaleX(0.994);transform-origin:0 0">Background Meshes</div>
<div class="t" style="left:279.70px;top:292.8px;color:#3a1e30;transform:scaleX(1.020);transform-origin:0 0">Dynamic</div>
<svg style="left:269px;top:303.5px" width="6" height="4"><path d="M0.5 0.5 L3 3 L5.5 0.5" stroke="#666" stroke-width="0.8" fill="none"/></svg>
<div class="t" style="left:279.70px;top:301.4px;color:#3a1e30;transform:scaleX(1.006);transform-origin:0 0">Static or Imported</div>
<svg style="left:282px;top:311.8px" width="4" height="6"><path d="M0.5 0.5 L3 3 L0.5 5.5" stroke="#888" stroke-width="0.8" fill="none"/></svg>
<svg style="left:290px;top:310px" width="9" height="9"><rect x="0.5" y="0.5" width="8" height="8" fill="#e8e8e8" stroke="#999" stroke-width="0.6"/><path d="M1.5 6 Q4.5 2 7.5 5 M1.5 3.5 H7.5" stroke="#888" stroke-width="0.6" fill="none"/></svg>
<div class="t" style="left:302.00px;top:311.5px;color:#2a2a2a;transform:scaleX(0.940);transform-origin:0 0">Fault 01</div>
<svg style="left:261px;top:321.7px" width="4" height="6"><path d="M0.5 0.5 L3 3 L0.5 5.5" stroke="#888" stroke-width="0.8" fill="none"/></svg>
<div class="t" style="left:268.75px;top:321.2px;color:#3a1e30;transform:scaleX(1.006);transform-origin:0 0">Geological Model Volumes</div>
<div class="a" style="left:256px;top:390px;width:144px;height:1px;background:#e8e8e8"></div>
<div class="a" style="left:255.5px;top:393.5px;width:145.5px;height:9.5px;background:#d9d9d9"></div>
<div class="t" style="left:258.60px;top:395.5px;color:#2a2a2a;transform:scaleX(0.979);transform-origin:0 0">Properties</div>
<svg style="left:392.5px;top:395.5px" width="6" height="6"><rect x="0.5" y="1.8" width="3.5" height="3.5" fill="none" stroke="#444" stroke-width="0.8"/><path d="M1.8 0.5 H5.3 V4" stroke="#444" stroke-width="0.8" fill="none"/></svg>
<div class="t" style="left:257.80px;top:406.8px;color:#3a1e30;transform:scaleX(0.959);transform-origin:0 0">12 faces, 1 feature selected</div>
<div class="a" style="left:256px;top:417px;width:145px;height:128px;background:#fff;border:1px solid #8c94a0"></div>
<div class="t" style="left:258.60px;top:421px;color:#555;transform:scaleX(0.983);transform-origin:0 0">Property</div>
<div class="a" style="left:328px;top:418px;width:1px;height:10px;background:#eee"></div>
<div class="t" style="left:330.50px;top:421px;color:#444;transform:scaleX(0.946);transform-origin:0 0">Value</div>
<svg style="left:259px;top:433.5px" width="6" height="4"><path d="M0.5 0.5 L3 3 L5.5 0.5" stroke="#666" stroke-width="0.8" fill="none"/></svg>
<div class="t" style="left:268.75px;top:432px;color:#2a2a2a;transform:scaleX(0.969);transform-origin:0 0">Associations</div>
<div class="a" style="left:257px;top:439.5px;width:143px;height:9.5px;background:#f0f0f0;border-top:1px solid #e8e8e8"></div>
<div class="a" style="left:278px;top:439.5px;width:1px;height:9.5px;background:#fff"></div>
<div class="a" style="left:328px;top:439.5px;width:1px;height:9.5px;background:#fff"></div>
<div class="t" style="left:279.00px;top:442px;color:#3a1e30;transform:scaleX(1.029);transform-origin:0 0">Hydraulic</div>
<div class="t" style="left:330.00px;top:442px;color:#3a1e30;transform:scaleX(1.016);transform-origin:0 0">None</div>
<svg style="left:259px;top:454px" width="6" height="4"><path d="M0.5 0.5 L3 3 L5.5 0.5" stroke="#666" stroke-width="0.8" fill="none"/></svg>
<div class="t" style="left:268.75px;top:452.5px;color:#2a2a2a;transform:scaleX(0.964);transform-origin:0 0">Mesh</div>
<div class="a" style="left:257px;top:460px;width:143px;height:9.5px;background:#f0f0f0;border-top:1px solid #e8e8e8;border-bottom:1px solid #e8e8e8"></div>
<div class="a" style="left:278px;top:460px;width:1px;height:9.5px;background:#fff"></div>
<div class="a" style="left:328px;top:460px;width:1px;height:9.5px;background:#fff"></div>
<div class="t" style="left:279.00px;top:462.5px;color:#3a1e30;transform:scaleX(0.936);transform-origin:0 0">Element Edge ...</div>
<div class="t" style="left:330.00px;top:462.5px;color:#2a2a2a;transform:scaleX(0.942);transform-origin:0 0">Use Default Size</div>
<div class="a" style="left:400.5px;top:97.5px;width:2px;height:448px;background:#e8e8e8"></div>
<div class="a" style="left:1004px;top:97.5px;width:19px;height:448px;background:#f0f0f0;border-left:1px solid #e6e6e6"></div>
<div class="a" style="left:1023px;top:59px;width:1px;height:504px;background:#d0d0d0"></div>
<div class="a" style="left:1006px;top:99.5px;width:14px;height:0;border-top:1px dotted #b8b8b8"></div>
<div class="a" style="left:1005.5px;top:102px;width:16.3px;height:15.8px;background:#cce4f7;border:1px dotted #a8cfee"></div>
<div class="a" style="left:1005.5px;top:118.4px;width:16.3px;height:15.0px;background:#cce4f7;border:1px dotted #a8cfee"></div>
<div class="a" style="left:1005.5px;top:138px;width:16.3px;height:14.2px;background:#cce4f7;border:1px dotted #a8cfee"></div>
<div class="a" style="left:1005.5px;top:153.6px;width:16.3px;height:14.2px;background:#cce4f7;border:1px dotted #a8cfee"></div>
<div class="a" style="left:1005.5px;top:169px;width:16.3px;height:14.4px;background:#cce4f7;border:1px dotted #a8cfee"></div>
<div class="a" style="left:1005.5px;top:184.7px;width:16.3px;height:15.0px;background:#cce4f7;border:1px dotted #a8cfee"></div>
<div class="a" style="left:1005.5px;top:219.8px;width:16.3px;height:15.1px;background:#cce4f7;border:1px dotted #a8cfee"></div>
<div class="a" style="left:1005.5px;top:275.3px;width:16.3px;height:15.1px;background:#cce4f7;border:1px dotted #a8cfee"></div>
<div class="a" style="left:1005.5px;top:307.3px;width:16.3px;height:15.1px;background:#cce4f7;border:1px dotted #a8cfee"></div>
<div class="a" style="left:1006px;top:135.5px;width:14px;height:1px;background:#e0e0e0"></div>
<div class="a" style="left:1006px;top:201.5px;width:14px;height:1px;background:#e0e0e0"></div>
<div class="a" style="left:1006px;top:240px;width:14px;height:0;border-top:1px dotted #b8b8b8"></div>
<svg style="left:1007px;top:104px" width="15" height="15"><path d="M2 5 L12 1.5" stroke="#2ac0d8" stroke-width="1.5"/><circle cx="3" cy="5" r="2" fill="#2a8ad8"/><path d="M3 6 L4 11" stroke="#2ac0d8" stroke-width="1.2"/><path d="M7 7 L12.5 12 L10.5 12.3 L11.5 14 L10.5 14.4 L9.6 12.8 L8.3 14Z" fill="#2a6ac0"/></svg>
<svg style="left:1007px;top:120px" width="15" height="15"><path d="M2 3 Q6 0 7 3 Q7 6 3 7 Q1 9 3 11 L7 12" stroke="#2a7ac8" stroke-width="1.1" fill="none"/><path d="M7 7 L12.5 12 L10.5 12.3 L11.5 14 L10.5 14.4 L9.6 12.8 L8.3 14Z" fill="#2a6ac0"/></svg>
<svg style="left:1007px;top:140px" width="15" height="15"><path d="M6 1 L10.5 3 V8.5 L6 10.5 L1.5 8.5 V3Z" fill="#fff" stroke="#2a7ac8" stroke-width="1"/><path d="M1.5 3 L6 5 L10.5 3 M6 5 V10.5" stroke="#2a7ac8" stroke-width="0.8" fill="none"/><path d="M7 7 L12.5 12 L10.5 12.3 L11.5 14 L10.5 14.4 L9.6 12.8 L8.3 14Z" fill="#2a6ac0"/></svg>
<svg style="left:1007px;top:155.5px" width="15" height="15"><path d="M6 1 L10.5 3 V8.5 L6 10.5 L1.5 8.5 V3Z" fill="#fff" stroke="#2a7ac8" stroke-width="1"/><path d="M1.5 3 L6 5 L10.5 3 M6 5 V10.5" stroke="#2a7ac8" stroke-width="0.8" fill="none"/><path d="M7 7 L12.5 12 L10.5 12.3 L11.5 14 L10.5 14.4 L9.6 12.8 L8.3 14Z" fill="#2a6ac0"/></svg>
<svg style="left:1007px;top:171px" width="15" height="15"><path d="M6 1 L10.5 3 V8.5 L6 10.5 L1.5 8.5 V3Z" fill="#fff" stroke="#2a7ac8" stroke-width="1"/><path d="M1.5 3 L6 5 L10.5 3 M6 5 V10.5" stroke="#2a7ac8" stroke-width="0.8" fill="none"/><path d="M7 7 L12.5 12 L10.5 12.3 L11.5 14 L10.5 14.4 L9.6 12.8 L8.3 14Z" fill="#2a6ac0"/></svg>
<svg style="left:1007px;top:186.5px" width="15" height="15"><path d="M6 1 L10.5 3 V8.5 L6 10.5 L1.5 8.5 V3Z" fill="#2ab0e0" stroke="#2a7ac8" stroke-width="1"/><path d="M1.5 3 L6 5 L10.5 3 M6 5 V10.5" stroke="#2a7ac8" stroke-width="0.8" fill="none"/><path d="M7 7 L12.5 12 L10.5 12.3 L11.5 14 L10.5 14.4 L9.6 12.8 L8.3 14Z" fill="#2a6ac0"/></svg>
<svg style="left:1007px;top:205px" width="15" height="15"><path d="M2 10 L6 1.5 L6 8Z" fill="#2a8ad8"/><path d="M6 8 L12 8.5 M6 8 L4 12" stroke="#2ac0d8" stroke-width="1.3"/><path d="M7 7 L12.5 12 L10.5 12.3 L11.5 14 L10.5 14.4 L9.6 12.8 L8.3 14Z" fill="#2a6ac0"/></svg>
<svg style="left:1007px;top:221.5px" width="15" height="15"><rect x="1.5" y="1.5" width="9.5" height="9.5" fill="#dff0fb" stroke="#2a7ac8" stroke-width="0.8"/><path d="M2.5 9 L6 4 L10 8" stroke="#2a8ad8" stroke-width="0.9" fill="none"/><path d="M7 7 L12.5 12 L10.5 12.3 L11.5 14 L10.5 14.4 L9.6 12.8 L8.3 14Z" fill="#2a6ac0"/></svg>
<svg style="left:1007px;top:246px" width="15" height="15"><rect x="4" y="1" width="5" height="3" fill="#8ad0f0"/><rect x="3" y="4" width="7" height="6" fill="#2a8ad8"/><path d="M11 12 H14 L12.5 13.5Z" fill="#333"/></svg>
<svg style="left:1007px;top:261.5px" width="15" height="15"><path d="M6.5 1 L11.5 3.2 V9.3 L6.5 11.5 L1.5 9.3 V3.2Z" fill="#2aa8d8"/><path d="M1.5 3.2 L6.5 5.4 L11.5 3.2" stroke="#8ae0f8" stroke-width="0.8" fill="none"/><path d="M11 12 H14 L12.5 13.5Z" fill="#333"/></svg>
<svg style="left:1007px;top:277.5px" width="15" height="15"><path d="M6.5 2 L7.5 5 L10.5 4 L8.5 6.5 L11 9 L7.8 8.5 L6.5 11.5 L5.2 8.5 L2 9 L4.5 6.5 L2.5 4 L5.5 5Z" fill="#2a8ad8"/></svg>
<svg style="left:1007px;top:293.5px" width="15" height="15"><path d="M3 2 V11 M6 2 V11 M9 2 V11 M2 4 H10 M2 7 H10 M2 10 H10" stroke="#777" stroke-width="0.9"/></svg>
<svg style="left:1007px;top:309.5px" width="15" height="15"><ellipse cx="6.5" cy="6.5" rx="5" ry="4.3" fill="#2a8ae0"/></svg>
<svg style="left:1007px;top:326px" width="15" height="15"><path d="M6.5 1 Q10.5 5 10.5 7.5 A4 4 0 0 1 2.5 7.5 Q2.5 5 6.5 1Z" fill="#2aa0d8"/></svg>
<div class="a" style="left:402px;top:545px;width:621px;height:18px;background:#f0f0f0;border-top:1px solid #e6e6e6"></div>
<div class="a" style="left:255px;top:545.5px;width:147px;height:17px;background:#f0f0f0"></div>
<div class="a" style="left:744px;top:548px;width:12.4px;height:11px;background:#cce4f7;border:1px solid #a8d0f0"></div>
<svg style="left:746px;top:549.5px" width="9" height="9"><circle cx="4.5" cy="4.5" r="3.5" fill="none" stroke="#666" stroke-width="0.8"/><path d="M4.5 4.5 V2 M4.5 4.5 L6.5 6" stroke="#666" stroke-width="0.7"/></svg>
<svg style="left:758.5px;top:549.5px" width="8" height="9"><path d="M1 1.5 H7.5 M1 4 H7.5 M1 6.5 H7.5 M2 0.5 V8 M4.2 0.5 V8 M6.4 0.5 V8" stroke="#3a8ad8" stroke-width="0.8"/></svg>
<div class="a" style="left:770px;top:549px;width:1px;height:10px;background:#ddd"></div>
<svg style="left:774.5px;top:549.5px" width="7" height="9"><path d="M1 0.5 L6 5.5 L3.8 5.5 L5.5 8.5 L4.2 8.5 L2.8 6 L1 7.5Z" fill="#444"/></svg>
<svg style="left:786px;top:549.5px" width="9" height="9"><path d="M4.5 0.5 V8.5 M0.5 4.5 H8.5" stroke="#333" stroke-width="0.8"/><circle cx="4.5" cy="0.9" r="0.9" fill="#333"/><circle cx="4.5" cy="8.1" r="0.9" fill="#333"/><circle cx="0.9" cy="4.5" r="0.9" fill="#333"/><circle cx="8.1" cy="4.5" r="0.9" fill="#333"/></svg>
<div class="a" style="left:796px;top:548px;width:12.4px;height:11px;background:#cce4f7;border:1px solid #a8d0f0"></div>
<svg style="left:797.5px;top:550px" width="10" height="8"><ellipse cx="5" cy="4" rx="4" ry="2.2" fill="none" stroke="#444" stroke-width="1"/><path d="M2 1.5 L4 0.5 L3.5 2.8" fill="#444"/></svg>
<svg style="left:810px;top:549.5px" width="9" height="9"><circle cx="5.3" cy="3.7" r="2.7" fill="none" stroke="#444" stroke-width="0.9"/><path d="M3.3 5.7 L0.8 8.2" stroke="#444" stroke-width="1.2"/></svg>
<svg style="left:822px;top:549px" width="10" height="10"><path d="M1 7 L7 1 L9 3 L3 9Z" fill="#fff" stroke="#5aa8e8" stroke-width="0.9"/></svg>
<div class="a" style="left:834.5px;top:549px;width:1px;height:10px;background:#ddd"></div>
<svg style="left:838px;top:549.5px" width="8" height="9"><path d="M1 0.5 V7.5 H7.5" stroke="#444" stroke-width="0.9" fill="none"/></svg>
<svg style="left:850px;top:549.5px" width="9" height="9"><circle cx="5.3" cy="3.7" r="2.9" fill="#8ac8f0" stroke="#444" stroke-width="0.8"/><path d="M3.3 5.7 L0.8 8.2" stroke="#444" stroke-width="1.2"/></svg>
<div class="a" style="left:862.5px;top:547px;width:1px;height:13px;background:#e0e0e0"></div>
<div class="a" style="left:865px;top:547.2px;width:43px;height:13px;background:#e4e4e4;border:1px solid #c0c0c0"></div>
<div class="a" style="left:910.5px;top:547.2px;width:37.5px;height:13px;background:#f0f0f0;border-top:1px solid #cfcfcf;border-left:1px solid #e4e4e4"></div>
<div class="a" style="left:948px;top:547.2px;width:37.8px;height:13px;background:#f0f0f0;border-top:1px solid #cfcfcf;border-left:1px solid #e4e4e4"></div>
<div class="a" style="left:985.8px;top:547.2px;width:36.2px;height:13px;background:#f0f0f0;border-top:1px solid #cfcfcf;border-left:1px solid #e4e4e4"></div>
<svg style="left:0;top:0" width="1024" height="576">
<ellipse cx="462.5" cy="517" rx="25.5" ry="12.5" fill="none" stroke="#e4e4e4" stroke-width="5"/>
<path d="M448.5 496.8 L464.4 489.9 L478.3 497.5 L461.7 503.75Z" fill="#e2e2e2"/>
<path d="M448.5 496.8 L461.7 503.75 L461.7 522.5 L448.5 513.5Z" fill="#d2d2d2"/>
<path d="M461.7 503.75 L478.3 497.5 L478.3 514.9 L461.7 522.5Z" fill="#c6c6c6"/>
<path d="M448.5 496.8 L464.4 489.9 L478.3 497.5 L461.7 503.75Z M461.7 503.75 V522.5" fill="none" stroke="#b4b4b4" stroke-width="0.4"/>
<text x="461" y="498" font-size="2.6" fill="#666" font-family="Liberation Sans" transform="rotate(-20 461 498)">TOP</text>
<text x="451" y="508" font-size="2.6" fill="#777" font-family="Liberation Sans" transform="rotate(25 451 508)">LEFT</text>
<text x="463" y="513" font-size="2.6" fill="#666" font-family="Liberation Sans" transform="rotate(-22 463 513)">FRONT</text>
<path d="M447 515 V487.8" stroke="#2ac838" stroke-width="1.1"/>
<path d="M448.5 515.5 L468 528.75" stroke="#1e3cc0" stroke-width="1.1"/>
<text x="446" y="477" font-size="4.5" fill="#3aa8a0" font-family="Liberation Sans">Y</text>
<text x="466.5" y="533" font-size="4.5" fill="#4a9ae8" font-family="Liberation Sans">Z</text>
<text x="440" y="526" font-size="4" fill="#333" font-family="Liberation Sans" transform="rotate(-28 440 526)">W</text>
<text x="478" y="526" font-size="4" fill="#333" font-family="Liberation Sans" transform="rotate(28 478 526)">S</text>
<text x="479" y="510" font-size="3" fill="#444" font-family="Liberation Sans">E</text>
</svg>
<svg style="left:0;top:0" width="1024" height="576" viewBox="0 0 1024 576"><defs>
<clipPath id="lf"><polygon points="452.8,270.0 452.8,278.2 462.2,281.9 474.3,282.5 490.0,281.3 498.6,283.7 502.3,285.5 513.2,290.4 524.7,297.2 540.8,307.0 561.7,321.7 582.5,336.2 598.0,350.0 614.7,363.0 638.3,378.3 660.0,392.0 665.6,396.6 681.2,409.0 687.5,417.0 687.5,522.5 452.8,391.5"/></clipPath>
<clipPath id="rf"><polygon points="687.5,417.0 962.8,255.0 962.8,408.4 687.5,522.5"/></clipPath>
</defs>
<g clip-path="url(#lf)">
<polygon points="450.0,98.0 690.0,266.0 690.0,1066.0 450.0,898.0" fill="#b3c5c3"/>
<polygon points="450.0,282.0 690.0,450.0 690.0,1066.0 450.0,898.0" fill="#98b0b4"/>
<polygon points="450.0,305.0 690.0,473.0 690.0,1066.0 450.0,898.0" fill="#a3a6b3"/>
<polygon points="450.0,321.0 690.0,489.0 690.0,1066.0 450.0,898.0" fill="#4f545c"/>
</g>
<g clip-path="url(#rf)">
<polygon points="680.0,240.0 970.0,240.0 970.0,540.0 680.0,540.0" fill="#4f545c"/>
<polygon points="680.0,200.0 970.0,200.0 970.0,379.0 687.5,487.0 680.0,490.0" fill="#a3a6b3"/>
<polygon points="680.0,200.0 970.0,200.0 970.0,364.3 687.5,470.0 680.0,473.0" fill="#98b0b4"/>
<polygon points="680.0,200.0 970.0,200.0 970.0,341.3 687.5,449.7 680.0,452.6" fill="#b3c5c3"/>
<polygon points="680.0,200.0 970.0,200.0 970.0,302.0 687.5,420.6 680.0,423.8" fill="#a3a6b3"/>
<polygon points="850.0,200.0 970.0,200.0 970.0,283.7 901.6,308.0 860.0,323.0" fill="#6f7190"/>
</g>

<polygon points="452.8,275.0 471.0,257.7 493.6,239.5 497.0,237.7 521.4,221.2 549.0,207.4 557.8,203.0 573.0,190.0 585.0,182.5 610.0,165.0 635.0,147.5 660.0,135.0 682.5,122.5 700.0,113.8 720.0,103.8 740.0,102.8 752.5,105.2 763.4,116.9 774.4,129.4 777.5,133.3 781.4,130.2 790.0,132.5 791.6,141.9 793.9,137.2 798.6,152.8 810.3,160.6 826.0,171.6 849.4,182.5 868.0,190.0 888.0,200.0 913.0,201.2 928.0,215.0 943.8,230.0 962.8,255.0 962.8,273.0 915.6,297.2 889.0,322.0 863.0,347.5 830.0,364.7 818.4,372.5 795.0,391.0 779.0,400.6 756.0,407.0 730.0,407.5 712.5,412.2 687.5,417.0 681.2,409.0 665.6,396.6 660.0,392.0 638.3,378.3 614.7,363.0 598.0,350.0 582.5,336.2 561.7,321.7 540.8,307.0 524.7,297.2 513.2,290.4 502.3,285.5 498.6,283.7 490.0,281.3 474.3,282.5 462.2,281.9 452.8,278.2" fill="#6b7077"/>
<defs>
<clipPath id="ter"><polygon points="452.8,275.0 471.0,257.7 493.6,239.5 497.0,237.7 521.4,221.2 549.0,207.4 557.8,203.0 573.0,190.0 585.0,182.5 610.0,165.0 635.0,147.5 660.0,135.0 682.5,122.5 700.0,113.8 720.0,103.8 740.0,102.8 752.5,105.2 763.4,116.9 774.4,129.4 777.5,133.3 781.4,130.2 790.0,132.5 791.6,141.9 793.9,137.2 798.6,152.8 810.3,160.6 826.0,171.6 849.4,182.5 868.0,190.0 888.0,200.0 913.0,201.2 928.0,215.0 943.8,230.0 962.8,255.0 962.8,273.0 915.6,297.2 889.0,322.0 863.0,347.5 830.0,364.7 818.4,372.5 795.0,391.0 779.0,400.6 756.0,407.0 730.0,407.5 712.5,412.2 687.5,417.0 681.2,409.0 665.6,396.6 660.0,392.0 638.3,378.3 614.7,363.0 598.0,350.0 582.5,336.2 561.7,321.7 540.8,307.0 524.7,297.2 513.2,290.4 502.3,285.5 498.6,283.7 490.0,281.3 474.3,282.5 462.2,281.9 452.8,278.2"/></clipPath>
<clipPath id="cup"><polygon points="522.0,221.0 549.2,206.5 570.0,203.3 584.8,200.3 599.5,206.2 629.0,218.0 658.6,230.0 688.0,240.2 710.0,247.4 746.5,249.3 782.9,242.0 819.4,234.7 846.7,232.0 846.7,232.0 844.9,216.4 837.6,198.2 818.0,182.5 805.6,168.4 777.5,154.4 755.6,145.0 740.0,141.9 705.0,137.5 695.0,130.0 682.5,122.5 660.0,135.0 635.0,147.5 610.0,165.0 585.0,182.5 573.0,190.0 557.8,203.0 549.0,207.4 521.4,221.2"/></clipPath>
<clipPath id="clight"><polygon points="682.5,122.5 700.0,113.8 720.0,103.8 740.0,102.8 752.5,105.2 763.4,116.9 774.4,129.4 777.5,133.3 781.4,130.2 790.0,132.5 791.6,141.9 793.9,137.2 798.6,152.8 810.3,160.6 826.0,171.6 849.4,182.5 868.0,190.0 888.0,200.0 913.0,201.2 928.0,215.0 943.8,230.0 962.8,255.0 962.8,273.0 943.8,278.4 928.0,284.7 912.5,284.7 889.0,283.0 865.6,280.0 850.0,276.9 841.9,265.0 846.7,243.8 846.7,232.0 844.9,216.4 837.6,198.2 818.0,182.5 805.6,168.4 777.5,154.4 755.6,145.0 740.0,141.9 705.0,137.5 695.0,130.0"/></clipPath>
<clipPath id="clp"><polygon points="662.5,254.7 657.8,268.8 646.9,282.8 628.0,289.0 614.8,303.0 617.0,312.5 631.0,315.6 654.7,318.8 673.4,326.6 693.8,331.2 709.4,331.2 721.0,325.0 735.0,303.0 755.0,283.0 772.8,265.5 744.7,271.7 721.0,271.0 690.0,263.0 673.4,258.0"/></clipPath>
<clipPath id="clr"><polygon points="721.0,325.0 744.7,302.0 768.0,289.7 791.6,280.3 815.0,269.4 838.4,260.0 845.0,255.0 841.9,265.0 850.0,276.9 865.6,280.0 889.0,283.0 912.5,284.7 928.0,284.7 943.8,278.4 962.8,273.0 915.6,297.2 889.0,322.0 863.0,347.5 830.0,364.7 818.4,372.5 795.0,391.0 779.0,400.6 756.0,407.0 730.0,407.5 712.5,412.2 700.0,395.0 705.0,360.0 709.4,331.2"/></clipPath>
<clipPath id="cbl"><polygon points="570.0,215.0 599.5,227.0 629.0,237.3 658.6,252.0 673.4,258.0 662.5,254.7 657.8,268.8 646.9,282.8 635.0,270.0 620.0,258.0 600.0,245.0 575.0,232.0 557.0,231.0 545.0,224.0"/></clipPath>
<clipPath id="cwl"><polygon points="557.0,231.0 575.0,232.0 600.0,245.0 620.0,258.0 635.0,270.0 646.9,282.8 628.0,289.0 614.8,303.0 617.0,312.5 631.0,315.6 627.0,338.0 610.0,336.0 590.0,328.0 575.0,300.0 565.0,265.0"/></clipPath>
<clipPath id="cwr"><polygon points="772.8,265.5 799.0,256.9 830.6,249.0 846.7,243.8 845.0,255.0 838.4,260.0 815.0,269.4 791.6,280.3 768.0,289.7 744.7,302.0 721.0,325.0 735.0,303.0 755.0,283.0"/></clipPath>
<clipPath id="cband"><polygon points="522.0,221.0 549.2,206.5 570.0,203.3 584.8,200.3 599.5,206.2 629.0,218.0 658.6,230.0 688.0,240.2 710.0,247.4 746.5,249.3 782.9,242.0 819.4,234.7 846.7,232.0 846.7,243.8 837.6,245.6 801.0,253.0 770.0,265.7 746.5,269.3 720.0,269.8 695.6,263.9 673.4,258.0 658.6,252.0 629.0,237.3 599.5,227.0 570.0,215.0 528.0,221.0"/></clipPath>
<clipPath id="ell"><path d="M680 300 L680 234 Q684 196 712 188 Q736 172 760 186 Q786 206 790 240 L790 300Z"/></clipPath>
</defs>
<g clip-path="url(#ter)">
<polygon points="470.0,262.0 500.0,248.0 530.0,250.0 512.0,268.0 480.0,275.0" fill="#80858c" opacity="0.35"/>
<polygon points="495.0,240.0 540.0,228.0 552.0,236.0 520.0,252.0" fill="#7a7f86" opacity="0.4"/>
<polygon points="462.0,281.0 500.0,270.0 540.0,262.0 520.0,285.0 490.0,281.0" fill="#5d6269" opacity="0.35"/>
<polygon points="540.0,270.0 575.0,262.0 590.0,290.0 560.0,300.0" fill="#767b82" opacity="0.35"/>
<polygon points="520.0,300.0 548.0,290.0 575.0,318.0 545.0,312.0" fill="#5f646b" opacity="0.35"/>
<polygon points="600.0,318.0 640.0,300.0 660.0,322.0 630.0,340.0" fill="#777c83" opacity="0.35"/>
<polygon points="650.0,345.0 700.0,338.0 690.0,360.0 660.0,366.0" fill="#5f646b" opacity="0.3"/>
<polygon points="700.0,380.0 760.0,372.0 790.0,385.0 740.0,398.0" fill="#777c83" opacity="0.35"/>
<polygon points="800.0,350.0 850.0,336.0 840.0,360.0 810.0,372.0" fill="#60656c" opacity="0.35"/>
<polygon points="522.0,221.0 549.2,206.5 570.0,203.3 584.8,200.3 599.5,206.2 629.0,218.0 658.6,230.0 688.0,240.2 710.0,247.4 746.5,249.3 782.9,242.0 819.4,234.7 846.7,232.0 846.7,232.0 844.9,216.4 837.6,198.2 818.0,182.5 805.6,168.4 777.5,154.4 755.6,145.0 740.0,141.9 705.0,137.5 695.0,130.0 682.5,122.5 660.0,135.0 635.0,147.5 610.0,165.0 585.0,182.5 573.0,190.0 557.8,203.0 549.0,207.4 521.4,221.2" fill="#7a7f86" />
<g clip-path="url(#cup)"><ellipse cx="745" cy="300" rx="68.4" ry="38.0" fill="none" stroke="#5c6168" stroke-width="2.0"/><ellipse cx="745" cy="300" rx="83.2" ry="46.2" fill="none" stroke="#5c6168" stroke-width="2.0"/><ellipse cx="745" cy="300" rx="97.9" ry="54.4" fill="none" stroke="#5c6168" stroke-width="2.0"/><ellipse cx="745" cy="300" rx="112.7" ry="62.6" fill="none" stroke="#5c6168" stroke-width="2.0"/><ellipse cx="745" cy="300" rx="127.4" ry="70.8" fill="none" stroke="#5c6168" stroke-width="2.0"/><ellipse cx="745" cy="300" rx="142.2" ry="79.0" fill="none" stroke="#5c6168" stroke-width="2.0"/><ellipse cx="745" cy="300" rx="157.0" ry="87.2" fill="none" stroke="#5c6168" stroke-width="2.0"/><ellipse cx="745" cy="300" rx="171.7" ry="95.4" fill="none" stroke="#5c6168" stroke-width="2.0"/><ellipse cx="745" cy="300" rx="186.5" ry="103.6" fill="none" stroke="#5c6168" stroke-width="2.0"/><ellipse cx="745" cy="300" rx="201.2" ry="111.8" fill="none" stroke="#5c6168" stroke-width="2.0"/><ellipse cx="745" cy="300" rx="216.0" ry="120.0" fill="none" stroke="#5c6168" stroke-width="2.0"/><ellipse cx="745" cy="300" rx="230.8" ry="128.2" fill="none" stroke="#5c6168" stroke-width="2.0"/><ellipse cx="745" cy="300" rx="245.5" ry="136.4" fill="none" stroke="#5c6168" stroke-width="2.0"/><ellipse cx="745" cy="300" rx="260.3" ry="144.6" fill="none" stroke="#5c6168" stroke-width="2.0"/><ellipse cx="745" cy="300" rx="275.0" ry="152.8" fill="none" stroke="#5c6168" stroke-width="2.0"/><ellipse cx="745" cy="300" rx="289.8" ry="161.0" fill="none" stroke="#5c6168" stroke-width="2.0"/><ellipse cx="745" cy="300" rx="304.6" ry="169.2" fill="none" stroke="#5c6168" stroke-width="2.0"/><ellipse cx="745" cy="300" rx="319.3" ry="177.4" fill="none" stroke="#5c6168" stroke-width="2.0"/><ellipse cx="745" cy="300" rx="334.1" ry="185.6" fill="none" stroke="#5c6168" stroke-width="2.0"/><ellipse cx="745" cy="300" rx="348.8" ry="193.8" fill="none" stroke="#5c6168" stroke-width="2.0"/></g>
<polygon points="521.4,221.2 549.0,207.4 557.8,203.0 573.0,190.0 585.0,182.5 610.0,165.0 635.0,147.5 660.0,135.0 682.5,122.5 695.0,130.0 660.0,148.0 630.0,165.0 600.0,184.0 575.0,200.0" fill="#6c7178" />
<polygon points="600.0,175.0 640.0,152.0 628.0,162.0 604.0,178.0" fill="#7d8289" />
<polygon points="682.5,122.5 700.0,113.8 720.0,103.8 740.0,102.8 752.5,105.2 763.4,116.9 774.4,129.4 777.5,133.3 781.4,130.2 790.0,132.5 791.6,141.9 793.9,137.2 798.6,152.8 810.3,160.6 826.0,171.6 849.4,182.5 868.0,190.0 888.0,200.0 913.0,201.2 928.0,215.0 943.8,230.0 962.8,255.0 962.8,273.0 943.8,278.4 928.0,284.7 912.5,284.7 889.0,283.0 865.6,280.0 850.0,276.9 841.9,265.0 846.7,243.8 846.7,232.0 844.9,216.4 837.6,198.2 818.0,182.5 805.6,168.4 777.5,154.4 755.6,145.0 740.0,141.9 705.0,137.5 695.0,130.0" fill="#bec8cf" />
<clipPath id="cridge"><polygon points="818.0,182.5 826.0,171.6 849.4,182.5 868.0,190.0 888.0,200.0 913.9,201.8 878.5,232.2 841.3,266.1 846.7,243.8 846.7,232.0 844.9,216.4 837.6,198.2"/></clipPath>
<polygon points="818.0,182.5 826.0,171.6 849.4,182.5 868.0,190.0 888.0,200.0 913.9,201.8 878.5,232.2 841.3,266.1 846.7,243.8 846.7,232.0 844.9,216.4 837.6,198.2" fill="#b0bac1" />
<g clip-path="url(#cridge)"><line x1="780" y1="290" x2="860" y2="180" stroke="#a0aab2" stroke-width="1.2"/><line x1="785" y1="290" x2="865" y2="180" stroke="#a0aab2" stroke-width="1.2"/><line x1="790" y1="290" x2="870" y2="180" stroke="#a0aab2" stroke-width="1.2"/><line x1="795" y1="290" x2="875" y2="180" stroke="#a0aab2" stroke-width="1.2"/><line x1="800" y1="290" x2="880" y2="180" stroke="#a0aab2" stroke-width="1.2"/><line x1="805" y1="290" x2="885" y2="180" stroke="#a0aab2" stroke-width="1.2"/><line x1="810" y1="290" x2="890" y2="180" stroke="#a0aab2" stroke-width="1.2"/><line x1="815" y1="290" x2="895" y2="180" stroke="#a0aab2" stroke-width="1.2"/><line x1="820" y1="290" x2="900" y2="180" stroke="#a0aab2" stroke-width="1.2"/><line x1="825" y1="290" x2="905" y2="180" stroke="#a0aab2" stroke-width="1.2"/><line x1="830" y1="290" x2="910" y2="180" stroke="#a0aab2" stroke-width="1.2"/><line x1="835" y1="290" x2="915" y2="180" stroke="#a0aab2" stroke-width="1.2"/><line x1="840" y1="290" x2="920" y2="180" stroke="#a0aab2" stroke-width="1.2"/><line x1="845" y1="290" x2="925" y2="180" stroke="#a0aab2" stroke-width="1.2"/><line x1="850" y1="290" x2="930" y2="180" stroke="#a0aab2" stroke-width="1.2"/><line x1="855" y1="290" x2="935" y2="180" stroke="#a0aab2" stroke-width="1.2"/><line x1="860" y1="290" x2="940" y2="180" stroke="#a0aab2" stroke-width="1.2"/><line x1="865" y1="290" x2="945" y2="180" stroke="#a0aab2" stroke-width="1.2"/><line x1="870" y1="290" x2="950" y2="180" stroke="#a0aab2" stroke-width="1.2"/><line x1="875" y1="290" x2="955" y2="180" stroke="#a0aab2" stroke-width="1.2"/><line x1="880" y1="290" x2="960" y2="180" stroke="#a0aab2" stroke-width="1.2"/><line x1="885" y1="290" x2="965" y2="180" stroke="#a0aab2" stroke-width="1.2"/></g>
<polygon points="913.9,201.8 928.0,215.0 943.8,230.0 962.8,255.0 962.8,268.0 920.0,262.0 890.0,258.0 878.5,232.2" fill="#c4cdd4" />
<g clip-path="url(#clight)"><ellipse cx="745" cy="300" rx="270.0" ry="150.0" fill="none" stroke="#a8b4bd" stroke-width="1.0"/><ellipse cx="745" cy="300" rx="284.4" ry="158.0" fill="none" stroke="#a8b4bd" stroke-width="1.0"/><ellipse cx="745" cy="300" rx="298.8" ry="166.0" fill="none" stroke="#a8b4bd" stroke-width="1.0"/><ellipse cx="745" cy="300" rx="313.2" ry="174.0" fill="none" stroke="#a8b4bd" stroke-width="1.0"/><ellipse cx="745" cy="300" rx="327.6" ry="182.0" fill="none" stroke="#a8b4bd" stroke-width="1.0"/><ellipse cx="745" cy="300" rx="342.0" ry="190.0" fill="none" stroke="#a8b4bd" stroke-width="1.0"/><ellipse cx="745" cy="300" rx="356.4" ry="198.0" fill="none" stroke="#a8b4bd" stroke-width="1.0"/><ellipse cx="745" cy="300" rx="370.8" ry="206.0" fill="none" stroke="#a8b4bd" stroke-width="1.0"/><ellipse cx="745" cy="300" rx="385.2" ry="214.0" fill="none" stroke="#a8b4bd" stroke-width="1.0"/><ellipse cx="745" cy="300" rx="399.6" ry="222.0" fill="none" stroke="#a8b4bd" stroke-width="1.0"/><ellipse cx="745" cy="300" rx="414.0" ry="230.0" fill="none" stroke="#a8b4bd" stroke-width="1.0"/></g>
<g clip-path="url(#ell)"><rect x="670" y="170" width="130" height="130" fill="#c4c8d0"/><path d="M675 186.0 Q738 176.0 800 186.0" stroke="#a6aab2" stroke-width="1.2" fill="none"/><path d="M675 193.3 Q738 183.3 800 193.3" stroke="#a6aab2" stroke-width="1.2" fill="none"/><path d="M675 200.6 Q738 190.6 800 200.6" stroke="#a6aab2" stroke-width="1.2" fill="none"/><path d="M675 207.9 Q738 197.9 800 207.9" stroke="#a6aab2" stroke-width="1.2" fill="none"/><path d="M675 215.2 Q738 205.2 800 215.2" stroke="#a6aab2" stroke-width="1.2" fill="none"/><path d="M675 222.5 Q738 212.5 800 222.5" stroke="#a6aab2" stroke-width="1.2" fill="none"/><path d="M675 229.8 Q738 219.8 800 229.8" stroke="#a6aab2" stroke-width="1.2" fill="none"/><path d="M675 237.1 Q738 227.1 800 237.1" stroke="#a6aab2" stroke-width="1.2" fill="none"/><path d="M675 244.4 Q738 234.4 800 244.4" stroke="#a6aab2" stroke-width="1.2" fill="none"/><path d="M675 251.7 Q738 241.7 800 251.7" stroke="#a6aab2" stroke-width="1.2" fill="none"/><path d="M675 259.0 Q738 249.0 800 259.0" stroke="#a6aab2" stroke-width="1.2" fill="none"/><path d="M675 266.3 Q738 256.3 800 266.3" stroke="#a6aab2" stroke-width="1.2" fill="none"/><path d="M675 273.6 Q738 263.6 800 273.6" stroke="#a6aab2" stroke-width="1.2" fill="none"/><path d="M675 280.9 Q738 270.9 800 280.9" stroke="#a6aab2" stroke-width="1.2" fill="none"/></g>
<polygon points="570.0,215.0 599.5,227.0 629.0,237.3 658.6,252.0 673.4,258.0 662.5,254.7 657.8,268.8 646.9,282.8 635.0,270.0 620.0,258.0 600.0,245.0 575.0,232.0 557.0,231.0 545.0,224.0" fill="#72777e" />
<g clip-path="url(#cbl)"><line x1="498" y1="200" x2="658" y2="280" stroke="#5c6168" stroke-width="1.3"/><line x1="505" y1="200" x2="665" y2="280" stroke="#5c6168" stroke-width="1.3"/><line x1="512" y1="200" x2="672" y2="280" stroke="#5c6168" stroke-width="1.3"/><line x1="519" y1="200" x2="679" y2="280" stroke="#5c6168" stroke-width="1.3"/><line x1="526" y1="200" x2="686" y2="280" stroke="#5c6168" stroke-width="1.3"/><line x1="533" y1="200" x2="693" y2="280" stroke="#5c6168" stroke-width="1.3"/><line x1="540" y1="200" x2="700" y2="280" stroke="#5c6168" stroke-width="1.3"/><line x1="547" y1="200" x2="707" y2="280" stroke="#5c6168" stroke-width="1.3"/><line x1="554" y1="200" x2="714" y2="280" stroke="#5c6168" stroke-width="1.3"/><line x1="561" y1="200" x2="721" y2="280" stroke="#5c6168" stroke-width="1.3"/><line x1="568" y1="200" x2="728" y2="280" stroke="#5c6168" stroke-width="1.3"/><line x1="575" y1="200" x2="735" y2="280" stroke="#5c6168" stroke-width="1.3"/></g>
<polygon points="557.0,231.0 575.0,232.0 600.0,245.0 620.0,258.0 635.0,270.0 646.9,282.8 628.0,289.0 614.8,303.0 617.0,312.5 631.0,315.6 627.0,338.0 610.0,336.0 590.0,328.0 575.0,300.0 565.0,265.0" fill="#676c73" />
<g clip-path="url(#cwl)"><path d="M555 228.0 Q558 300 588.0 345" stroke="#51565d" stroke-width="1.5" fill="none"/><path d="M558 229.0 Q561 300 591.0 345" stroke="#7b8087" stroke-width="0.8" fill="none"/><path d="M561 230.5 Q564 300 592.5 345" stroke="#51565d" stroke-width="1.5" fill="none"/><path d="M564 231.5 Q567 300 595.5 345" stroke="#7b8087" stroke-width="0.8" fill="none"/><path d="M567 233.0 Q570 300 597.0 345" stroke="#51565d" stroke-width="1.5" fill="none"/><path d="M570 234.0 Q573 300 600.0 345" stroke="#7b8087" stroke-width="0.8" fill="none"/><path d="M573 235.5 Q576 300 601.5 345" stroke="#51565d" stroke-width="1.5" fill="none"/><path d="M576 236.5 Q579 300 604.5 345" stroke="#7b8087" stroke-width="0.8" fill="none"/><path d="M579 238.0 Q582 300 606.0 345" stroke="#51565d" stroke-width="1.5" fill="none"/><path d="M582 239.0 Q585 300 609.0 345" stroke="#7b8087" stroke-width="0.8" fill="none"/><path d="M585 240.5 Q588 300 610.5 345" stroke="#51565d" stroke-width="1.5" fill="none"/><path d="M588 241.5 Q591 300 613.5 345" stroke="#7b8087" stroke-width="0.8" fill="none"/><path d="M591 243.0 Q594 300 615.0 345" stroke="#51565d" stroke-width="1.5" fill="none"/><path d="M594 244.0 Q597 300 618.0 345" stroke="#7b8087" stroke-width="0.8" fill="none"/><path d="M597 245.5 Q600 300 619.5 345" stroke="#51565d" stroke-width="1.5" fill="none"/><path d="M600 246.5 Q603 300 622.5 345" stroke="#7b8087" stroke-width="0.8" fill="none"/><path d="M603 248.0 Q606 300 624.0 345" stroke="#51565d" stroke-width="1.5" fill="none"/><path d="M606 249.0 Q609 300 627.0 345" stroke="#7b8087" stroke-width="0.8" fill="none"/><path d="M609 250.5 Q612 300 628.5 345" stroke="#51565d" stroke-width="1.5" fill="none"/><path d="M612 251.5 Q615 300 631.5 345" stroke="#7b8087" stroke-width="0.8" fill="none"/><path d="M615 253.0 Q618 300 633.0 345" stroke="#51565d" stroke-width="1.5" fill="none"/><path d="M618 254.0 Q621 300 636.0 345" stroke="#7b8087" stroke-width="0.8" fill="none"/><path d="M621 255.5 Q624 300 637.5 345" stroke="#51565d" stroke-width="1.5" fill="none"/><path d="M624 256.5 Q627 300 640.5 345" stroke="#7b8087" stroke-width="0.8" fill="none"/><path d="M627 258.0 Q630 300 642.0 345" stroke="#51565d" stroke-width="1.5" fill="none"/><path d="M630 259.0 Q633 300 645.0 345" stroke="#7b8087" stroke-width="0.8" fill="none"/></g>
<polygon points="662.5,254.7 657.8,268.8 646.9,282.8 628.0,289.0 614.8,303.0 617.0,312.5 631.0,315.6 654.7,318.8 673.4,326.6 693.8,331.2 709.4,331.2 721.0,325.0 735.0,303.0 755.0,283.0 772.8,265.5 744.7,271.7 721.0,271.0 690.0,263.0 673.4,258.0" fill="#b6bac2" />
<g clip-path="url(#clp)"><ellipse cx="720" cy="345" rx="17.0" ry="10.0" fill="none" stroke="#9ea2aa" stroke-width="1.2"/><ellipse cx="720" cy="345" rx="29.8" ry="17.5" fill="none" stroke="#9ea2aa" stroke-width="1.2"/><ellipse cx="720" cy="345" rx="42.5" ry="25.0" fill="none" stroke="#9ea2aa" stroke-width="1.2"/><ellipse cx="720" cy="345" rx="55.2" ry="32.5" fill="none" stroke="#9ea2aa" stroke-width="1.2"/><ellipse cx="720" cy="345" rx="68.0" ry="40.0" fill="none" stroke="#9ea2aa" stroke-width="1.2"/><ellipse cx="720" cy="345" rx="80.8" ry="47.5" fill="none" stroke="#9ea2aa" stroke-width="1.2"/><ellipse cx="720" cy="345" rx="93.5" ry="55.0" fill="none" stroke="#9ea2aa" stroke-width="1.2"/><ellipse cx="720" cy="345" rx="106.2" ry="62.5" fill="none" stroke="#9ea2aa" stroke-width="1.2"/><ellipse cx="720" cy="345" rx="119.0" ry="70.0" fill="none" stroke="#9ea2aa" stroke-width="1.2"/><ellipse cx="720" cy="345" rx="131.8" ry="77.5" fill="none" stroke="#9ea2aa" stroke-width="1.2"/><ellipse cx="720" cy="345" rx="144.5" ry="85.0" fill="none" stroke="#9ea2aa" stroke-width="1.2"/><ellipse cx="720" cy="345" rx="157.2" ry="92.5" fill="none" stroke="#9ea2aa" stroke-width="1.2"/><ellipse cx="720" cy="345" rx="170.0" ry="100.0" fill="none" stroke="#9ea2aa" stroke-width="1.2"/><ellipse cx="720" cy="345" rx="182.8" ry="107.5" fill="none" stroke="#9ea2aa" stroke-width="1.2"/><ellipse cx="720" cy="345" rx="195.5" ry="115.0" fill="none" stroke="#9ea2aa" stroke-width="1.2"/></g>
<polygon points="772.8,265.5 799.0,256.9 830.6,249.0 846.7,243.8 845.0,255.0 838.4,260.0 815.0,269.4 791.6,280.3 768.0,289.7 744.7,302.0 721.0,325.0 735.0,303.0 755.0,283.0" fill="#5f646b" />
<g clip-path="url(#cwr)"><line x1="700.0" y1="335" x2="722.0" y2="245" stroke="#50555c" stroke-width="1.3"/><line x1="704.2" y1="335" x2="726.2" y2="245" stroke="#50555c" stroke-width="1.3"/><line x1="708.4" y1="335" x2="730.4" y2="245" stroke="#50555c" stroke-width="1.3"/><line x1="712.6" y1="335" x2="734.6" y2="245" stroke="#50555c" stroke-width="1.3"/><line x1="716.8" y1="335" x2="738.8" y2="245" stroke="#50555c" stroke-width="1.3"/><line x1="721.0" y1="335" x2="743.0" y2="245" stroke="#50555c" stroke-width="1.3"/><line x1="725.2" y1="335" x2="747.2" y2="245" stroke="#50555c" stroke-width="1.3"/><line x1="729.4" y1="335" x2="751.4" y2="245" stroke="#50555c" stroke-width="1.3"/><line x1="733.6" y1="335" x2="755.6" y2="245" stroke="#50555c" stroke-width="1.3"/><line x1="737.8" y1="335" x2="759.8" y2="245" stroke="#50555c" stroke-width="1.3"/><line x1="742.0" y1="335" x2="764.0" y2="245" stroke="#50555c" stroke-width="1.3"/><line x1="746.2" y1="335" x2="768.2" y2="245" stroke="#50555c" stroke-width="1.3"/><line x1="750.4" y1="335" x2="772.4" y2="245" stroke="#50555c" stroke-width="1.3"/><line x1="754.6" y1="335" x2="776.6" y2="245" stroke="#50555c" stroke-width="1.3"/><line x1="758.8" y1="335" x2="780.8" y2="245" stroke="#50555c" stroke-width="1.3"/><line x1="763.0" y1="335" x2="785.0" y2="245" stroke="#50555c" stroke-width="1.3"/><line x1="767.2" y1="335" x2="789.2" y2="245" stroke="#50555c" stroke-width="1.3"/><line x1="771.4" y1="335" x2="793.4" y2="245" stroke="#50555c" stroke-width="1.3"/><line x1="775.6" y1="335" x2="797.6" y2="245" stroke="#50555c" stroke-width="1.3"/><line x1="779.8" y1="335" x2="801.8" y2="245" stroke="#50555c" stroke-width="1.3"/><line x1="784.0" y1="335" x2="806.0" y2="245" stroke="#50555c" stroke-width="1.3"/><line x1="788.2" y1="335" x2="810.2" y2="245" stroke="#50555c" stroke-width="1.3"/><line x1="792.4" y1="335" x2="814.4" y2="245" stroke="#50555c" stroke-width="1.3"/><line x1="796.6" y1="335" x2="818.6" y2="245" stroke="#50555c" stroke-width="1.3"/><line x1="800.8" y1="335" x2="822.8" y2="245" stroke="#50555c" stroke-width="1.3"/><line x1="805.0" y1="335" x2="827.0" y2="245" stroke="#50555c" stroke-width="1.3"/><line x1="809.2" y1="335" x2="831.2" y2="245" stroke="#50555c" stroke-width="1.3"/><line x1="813.4" y1="335" x2="835.4" y2="245" stroke="#50555c" stroke-width="1.3"/><line x1="817.6" y1="335" x2="839.6" y2="245" stroke="#50555c" stroke-width="1.3"/><line x1="821.8" y1="335" x2="843.8" y2="245" stroke="#50555c" stroke-width="1.3"/><line x1="826.0" y1="335" x2="848.0" y2="245" stroke="#50555c" stroke-width="1.3"/><line x1="830.2" y1="335" x2="852.2" y2="245" stroke="#50555c" stroke-width="1.3"/><line x1="834.4" y1="335" x2="856.4" y2="245" stroke="#50555c" stroke-width="1.3"/><line x1="838.6" y1="335" x2="860.6" y2="245" stroke="#50555c" stroke-width="1.3"/><line x1="842.8" y1="335" x2="864.8" y2="245" stroke="#50555c" stroke-width="1.3"/><line x1="847.0" y1="335" x2="869.0" y2="245" stroke="#50555c" stroke-width="1.3"/></g>
<polygon points="721.0,325.0 744.7,302.0 768.0,289.7 791.6,280.3 815.0,269.4 838.4,260.0 845.0,255.0 841.9,265.0 850.0,276.9 865.6,280.0 889.0,283.0 912.5,284.7 928.0,284.7 943.8,278.4 962.8,273.0 915.6,297.2 889.0,322.0 863.0,347.5 830.0,364.7 818.4,372.5 795.0,391.0 779.0,400.6 756.0,407.0 730.0,407.5 712.5,412.2 700.0,395.0 705.0,360.0 709.4,331.2" fill="#7c8188" />
<g clip-path="url(#clr)"><line x1="690" y1="200.0" x2="970" y2="270.0" stroke="#676c73" stroke-width="1.6"/><line x1="690" y1="208.0" x2="970" y2="278.0" stroke="#676c73" stroke-width="1.6"/><line x1="690" y1="216.0" x2="970" y2="286.0" stroke="#676c73" stroke-width="1.6"/><line x1="690" y1="224.0" x2="970" y2="294.0" stroke="#676c73" stroke-width="1.6"/><line x1="690" y1="232.0" x2="970" y2="302.0" stroke="#676c73" stroke-width="1.6"/><line x1="690" y1="240.0" x2="970" y2="310.0" stroke="#676c73" stroke-width="1.6"/><line x1="690" y1="248.0" x2="970" y2="318.0" stroke="#676c73" stroke-width="1.6"/><line x1="690" y1="256.0" x2="970" y2="326.0" stroke="#676c73" stroke-width="1.6"/><line x1="690" y1="264.0" x2="970" y2="334.0" stroke="#676c73" stroke-width="1.6"/><line x1="690" y1="272.0" x2="970" y2="342.0" stroke="#676c73" stroke-width="1.6"/><line x1="690" y1="280.0" x2="970" y2="350.0" stroke="#676c73" stroke-width="1.6"/><line x1="690" y1="288.0" x2="970" y2="358.0" stroke="#676c73" stroke-width="1.6"/><line x1="690" y1="296.0" x2="970" y2="366.0" stroke="#676c73" stroke-width="1.6"/><line x1="690" y1="304.0" x2="970" y2="374.0" stroke="#676c73" stroke-width="1.6"/><line x1="690" y1="312.0" x2="970" y2="382.0" stroke="#676c73" stroke-width="1.6"/><line x1="690" y1="320.0" x2="970" y2="390.0" stroke="#676c73" stroke-width="1.6"/><line x1="690" y1="328.0" x2="970" y2="398.0" stroke="#676c73" stroke-width="1.6"/><line x1="690" y1="336.0" x2="970" y2="406.0" stroke="#676c73" stroke-width="1.6"/><line x1="690" y1="344.0" x2="970" y2="414.0" stroke="#676c73" stroke-width="1.6"/><line x1="690" y1="352.0" x2="970" y2="422.0" stroke="#676c73" stroke-width="1.6"/><line x1="690" y1="360.0" x2="970" y2="430.0" stroke="#676c73" stroke-width="1.6"/><line x1="690" y1="368.0" x2="970" y2="438.0" stroke="#676c73" stroke-width="1.6"/><line x1="690" y1="376.0" x2="970" y2="446.0" stroke="#676c73" stroke-width="1.6"/><line x1="690" y1="384.0" x2="970" y2="454.0" stroke="#676c73" stroke-width="1.6"/><line x1="690" y1="392.0" x2="970" y2="462.0" stroke="#676c73" stroke-width="1.6"/><line x1="690" y1="400.0" x2="970" y2="470.0" stroke="#676c73" stroke-width="1.6"/></g>
<polygon points="638.1,376.9 646.6,370.0 666.9,365.3 698.0,359.0 707.5,359.8 716.9,362.2 729.4,360.6 745.0,356.7 749.7,359.8 760.6,356.0 800.0,344.0 850.0,330.0 889.0,322.0 863.0,347.5 830.0,364.7 818.4,372.5 795.0,391.0 779.0,400.6 756.0,407.0 730.0,407.5 712.5,412.2 687.5,417.0 681.2,409.0 665.6,396.6 660.0,392.0" fill="#6a6f76" />
<polygon points="660.0,368.0 700.0,362.0 760.0,358.0 800.0,347.0 795.0,360.0 740.0,368.0 690.0,374.0" fill="#73787f" />
<polygon points="522.0,221.0 549.2,206.5 570.0,203.3 584.8,200.3 599.5,206.2 629.0,218.0 658.6,230.0 688.0,240.2 710.0,247.4 746.5,249.3 782.9,242.0 819.4,234.7 846.7,232.0 846.7,243.8 837.6,245.6 801.0,253.0 770.0,265.7 746.5,269.3 720.0,269.8 695.6,263.9 673.4,258.0 658.6,252.0 629.0,237.3 599.5,227.0 570.0,215.0 528.0,221.0" fill="#dcdcdc" />
<g clip-path="url(#cband)"><ellipse cx="745" cy="300" rx="54.0" ry="30.0" fill="none" stroke="#c2c2c2" stroke-width="1.1"/><ellipse cx="745" cy="300" rx="68.8" ry="38.2" fill="none" stroke="#c2c2c2" stroke-width="1.1"/><ellipse cx="745" cy="300" rx="83.5" ry="46.4" fill="none" stroke="#c2c2c2" stroke-width="1.1"/><ellipse cx="745" cy="300" rx="98.3" ry="54.6" fill="none" stroke="#c2c2c2" stroke-width="1.1"/><ellipse cx="745" cy="300" rx="113.0" ry="62.8" fill="none" stroke="#c2c2c2" stroke-width="1.1"/><ellipse cx="745" cy="300" rx="127.8" ry="71.0" fill="none" stroke="#c2c2c2" stroke-width="1.1"/><ellipse cx="745" cy="300" rx="142.6" ry="79.2" fill="none" stroke="#c2c2c2" stroke-width="1.1"/><ellipse cx="745" cy="300" rx="157.3" ry="87.4" fill="none" stroke="#c2c2c2" stroke-width="1.1"/><ellipse cx="745" cy="300" rx="172.1" ry="95.6" fill="none" stroke="#c2c2c2" stroke-width="1.1"/><ellipse cx="745" cy="300" rx="186.8" ry="103.8" fill="none" stroke="#c2c2c2" stroke-width="1.1"/></g>
</g>
<path d="M501.5,418.7 V286.7 L512.6,272.9 L533.4,260.8 L552.5,250.3 L556,246.9" stroke="#3a3e44" stroke-width="0.6" fill="none" opacity="0.75"/>
<path d="M524.4,431.5 V298 L535,283.3 L545.6,276.4 L568,269.4 L585.5,271.2 L611.5,273" stroke="#3a3e44" stroke-width="0.6" fill="none" opacity="0.75"/>
<path d="M743.4,103.8 L737,143 L732,173.6 L727,201.5 L722.4,230 L717.4,280.8 L709.7,306 L697,336.6 L687,357 L679.3,376 L671,398 V513.5" stroke="#3a3e44" stroke-width="0.6" fill="none" opacity="0.75"/>
<path d="M616,483 V362 L618,353 L626,348 L660,341 L690,336" stroke="#3a3e44" stroke-width="0.6" fill="none" opacity="0.75"/>
<path d="M775,133 L752.3,155.8 L727,176 L706.6,191.4 L676,211.7 L650.8,227 L625.4,237" stroke="#3a3e44" stroke-width="0.6" fill="none" opacity="0.75"/>
<path d="M798,153.3 L777.7,176 L752.3,196.4 L727,216.75 L701.5,237 L689.4,245 L661.5,268 L636,278 L610.8,280.8" stroke="#3a3e44" stroke-width="0.6" fill="none" opacity="0.75"/>
<path d="M888,199 L865,222 L843,245 L838,262 L813,275 L790,283" stroke="#3a3e44" stroke-width="0.6" fill="none" opacity="0.75"/>
<path d="M692,346.75 L737.7,341.7 L768,306" stroke="#3a3e44" stroke-width="0.6" fill="none" opacity="0.75"/>
<path d="M913.9,201.8 V381.6 L638.1,494 V376.9" stroke="#4a9ef0" stroke-width="0.9" fill="none"/>
<path d="M638.1,453.4 L913.9,347.2" stroke="#4a9ef0" stroke-width="0.9" fill="none"/>
<path d="M638.1,437.8 L913.9,331.6" stroke="#4a9ef0" stroke-width="0.9" fill="none"/>
<path d="M638.1,414.4 L913.9,310.1" stroke="#4a9ef0" stroke-width="0.9" fill="none"/>
<path d="M913.9,237.3 L841.3,266.1" stroke="#4a9ef0" stroke-width="0.9" fill="none"/>
<path d="M888.7,262.7 L821,286.4" stroke="#4a9ef0" stroke-width="0.9" fill="none"/>
<path d="M895,280 L797.25,313.5" stroke="#4a9ef0" stroke-width="0.9" fill="none"/>
<path d="M878.5,250.9 C892,268 898,295 913.9,330" stroke="#4a9ef0" stroke-width="0.9" fill="none"/>
<path d="M902.2,242.4 Q909,248 913.9,254.3" stroke="#4a9ef0" stroke-width="0.9" fill="none"/>
<path d="M727.8,458 C745,425 790,398 818.4,420.6" stroke="#4a9ef0" stroke-width="0.9" fill="none"/>
<path d="M913.9,201.8 L878.5,232.2 L841.3,266.1 L821,286.4 L797.25,313.5 L780,332.5 L760.6,356 L749.7,359.8 L745,356.7 L729.4,360.6 L716.9,362.2 L707.5,359.8 L698,359 L666.9,365.3 L646.6,370 L638.1,376.9" stroke="#4a9ef0" stroke-width="0.9" fill="none"/>
<path d="M911,205 L876,236 L839,269.5 L819,289.5 L795.5,316.5 L778.5,335.5 L761.5,358 L749.7,361.6 L745,358.5 L729.4,362.4 L716.9,364 L707.5,361.6 L698,360.8 L666.9,367.1 L646.6,371.8 L638.1,378.7" stroke="#4a9ef0" stroke-width="0.9" fill="none"/></svg>
</body></html>
